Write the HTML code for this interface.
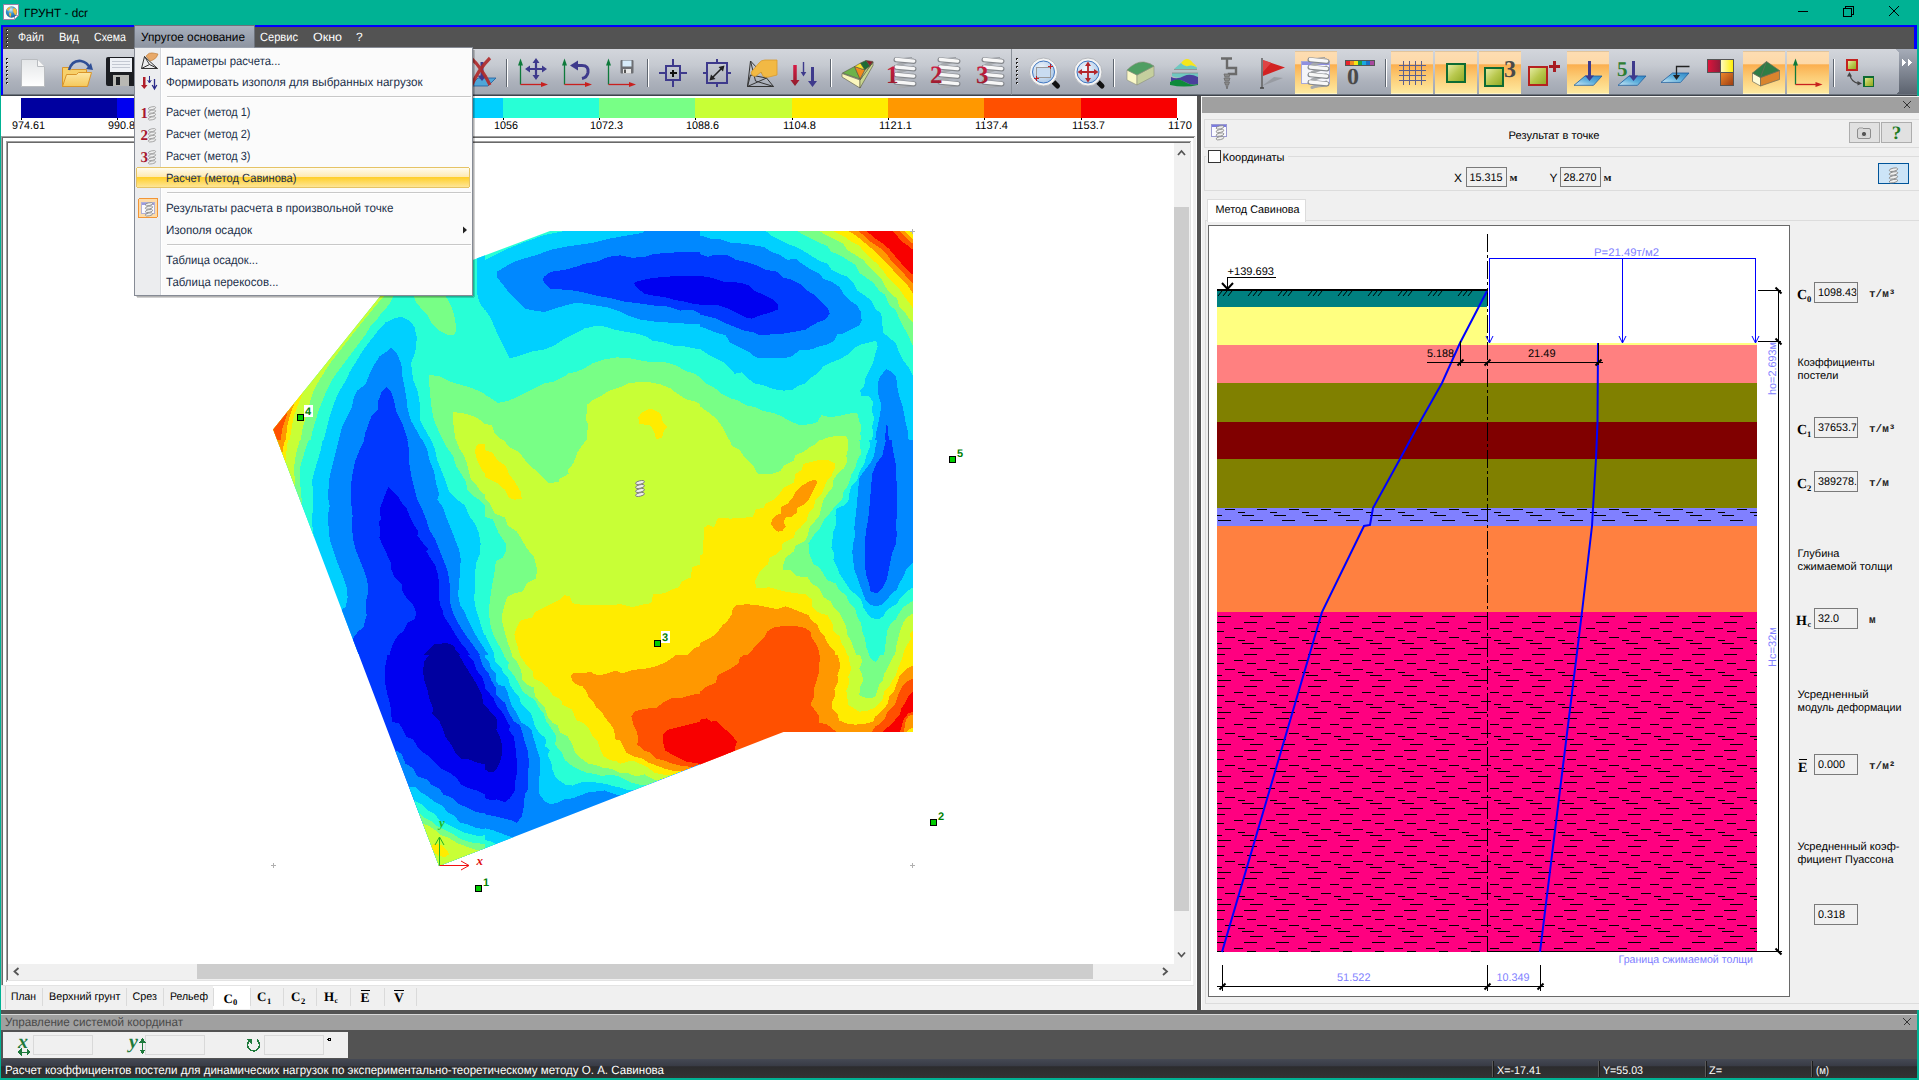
<!DOCTYPE html>
<html><head><meta charset="utf-8"><title>ГРУНТ - dcr</title>
<style>html,body{margin:0;padding:0;background:#00B294;overflow:hidden}svg{display:block;font-family:"Liberation Sans",sans-serif}
.c{shape-rendering:crispEdges}</style></head><body>
<svg width="1919" height="1080" viewBox="0 0 1919 1080" shape-rendering="crispEdges" text-rendering="geometricPrecision">
<!-- frame -->
<rect x="0" y="0" width="1919" height="1080" fill="#00B294" />
<text x="24" y="17" font-size="12" fill="#000" textLength="64" lengthAdjust="spacingAndGlyphs" >ГРУНТ - dcr</text>
<defs><radialGradient id="globe" cx=".45" cy=".3" r=".75"><stop offset="0" stop-color="#D8EEF9"/><stop offset=".45" stop-color="#3C97CF"/><stop offset="1" stop-color="#0F5A98"/></radialGradient></defs><g shape-rendering="auto"><path d="M3.500 4.500h15v11l-4 4h-11z" fill="#fbfbfb" stroke="#9A7FA6" stroke-width="1"/><path d="M14.500 19.500v-4h4z" fill="#fff" stroke="#9A7FA6" stroke-width=".8"/><circle cx="11.500" cy="12" r="5.700" fill="url(#globe)"/><path d="M6.800 9.200q1.200-1.800 3.200-2.200q.8.600.2 1.500q-1 .8-1.600 2.200q-1.200.2-1.800-1.500zM9.200 12.800q1.400-.4 2 .8q.2 1.600-.8 3.400q-.8-.2-1-1.800q-.6-1.200-.2-2.400zM13.200 8.300q2-.6 3.200 1.200q1 2.400 0 4.600q-.8 1.200-1.600.8q-.2-1.600-1.400-2.400q-.8-2.200-.2-4.200zM10.800 7q.8-.5 1.400 0l-.6.600z" fill="#F5B93A"/></g>
<rect x="1798" y="11" width="10" height="1" fill="#000" />
<path d="M1843.5 8.5h8v8h-8z M1845.5 8.5v-2h8v8h-2" fill="none" stroke="#000" stroke-width="1"/>
<path d="M1889 6l10 10M1899 6l-10 10" stroke="#000" stroke-width="1.1" fill="none"/>
<rect x="1" y="25" width="1916" height="2" fill="#0000FF" />
<rect x="1" y="25" width="2" height="70" fill="#0000FF" />
<rect x="1914" y="25" width="3" height="24" fill="#0000FF" />
<rect x="3" y="27" width="1911" height="22" fill="#535353" />
<rect x="6" y="29" width="2" height="2" fill="#2a2a2a" />
<rect x="7" y="30" width="1" height="1" fill="#fff" />
<rect x="6" y="33" width="2" height="2" fill="#2a2a2a" />
<rect x="7" y="34" width="1" height="1" fill="#fff" />
<rect x="6" y="37" width="2" height="2" fill="#2a2a2a" />
<rect x="7" y="38" width="1" height="1" fill="#fff" />
<rect x="6" y="41" width="2" height="2" fill="#2a2a2a" />
<rect x="7" y="42" width="1" height="1" fill="#fff" />
<rect x="6" y="45" width="2" height="2" fill="#2a2a2a" />
<rect x="7" y="46" width="1" height="1" fill="#fff" />
<text x="18" y="41" font-size="12" fill="#fff" textLength="26" lengthAdjust="spacingAndGlyphs" >Файл</text>
<text x="59" y="41" font-size="12" fill="#fff" textLength="20" lengthAdjust="spacingAndGlyphs" >Вид</text>
<text x="94" y="41" font-size="12" fill="#fff" textLength="32" lengthAdjust="spacingAndGlyphs" >Схема</text>
<defs><linearGradient id="mh" x1="0" y1="0" x2="0" y2="1"><stop offset="0" stop-color="#A9B1BF"/><stop offset="1" stop-color="#8B929E"/></linearGradient></defs>
<rect x="134" y="25" width="121" height="24" fill="url(#mh)" />
<rect x="134" y="25" width="121" height="1" fill="#6d737d" />
<rect x="134" y="25" width="1" height="24" fill="#6d737d" />
<rect x="254" y="25" width="1" height="24" fill="#6d737d" />
<text x="141" y="41" font-size="12" fill="#000" textLength="104" lengthAdjust="spacingAndGlyphs" >Упругое основание</text>
<text x="260" y="41" font-size="12" fill="#fff" textLength="38" lengthAdjust="spacingAndGlyphs" >Сервис</text>
<text x="313" y="41" font-size="12" fill="#fff" textLength="29" lengthAdjust="spacingAndGlyphs" >Окно</text>
<text x="356" y="41" font-size="12" fill="#fff" >?</text>
<defs><linearGradient id="tb" x1="0" y1="0" x2="0" y2="1"><stop offset="0" stop-color="#D3D6DC"/><stop offset=".35" stop-color="#C6CAD1"/><stop offset=".7" stop-color="#ADB2BC"/><stop offset="1" stop-color="#A0A6B1"/></linearGradient><linearGradient id="tbc" x1="0" y1="0" x2="0" y2="1"><stop offset="0" stop-color="#A6ACB8"/><stop offset="1" stop-color="#5A616D"/></linearGradient></defs>
<rect x="3" y="49" width="1914" height="46" fill="url(#tbc)" />
<path d="M3 49H1893q6 0 6 6V89q0 6-6 6H3z" fill="url(#tb)"/>
<rect x="3" y="94" width="1914" height="1" fill="#6b727c" />
<rect x="1" y="95" width="1916" height="1" fill="#3e434b" />
<rect x="6" y="58" width="2" height="2" fill="#1f1f1f" />
<rect x="7" y="59" width="1" height="1" fill="#fff" />
<rect x="6" y="62" width="2" height="2" fill="#1f1f1f" />
<rect x="7" y="63" width="1" height="1" fill="#fff" />
<rect x="6" y="66" width="2" height="2" fill="#1f1f1f" />
<rect x="7" y="67" width="1" height="1" fill="#fff" />
<rect x="6" y="70" width="2" height="2" fill="#1f1f1f" />
<rect x="7" y="71" width="1" height="1" fill="#fff" />
<rect x="6" y="74" width="2" height="2" fill="#1f1f1f" />
<rect x="7" y="75" width="1" height="1" fill="#fff" />
<rect x="6" y="78" width="2" height="2" fill="#1f1f1f" />
<rect x="7" y="79" width="1" height="1" fill="#fff" />
<rect x="6" y="82" width="2" height="2" fill="#1f1f1f" />
<rect x="7" y="83" width="1" height="1" fill="#fff" />
<path d="M1902 59l4 3.5-4 3.5z M1908 59l4 3.5-4 3.5z" fill="#fff"/>
<rect x="1" y="96" width="1196" height="914" fill="#fff" />
<rect x="1197" y="96" width="4" height="914" fill="#535353" />
<rect x="1201" y="96" width="1716" height="914" fill="#F0F0F0" />
<rect x="1201" y="96" width="1" height="914" fill="#fff" />
<rect x="1202" y="97" width="1714" height="16" fill="#A0A0A0" />
<path d="M1903.5 101.5l7 7M1910.5 101.5l-7 7" stroke="#333" stroke-width="1.1" fill="none"/>
<rect x="1" y="1010" width="1916" height="49" fill="#535353" />
<rect x="1" y="1014" width="1916" height="16" fill="#A0A0A0" />
<rect x="1" y="1014" width="1916" height="1" fill="#d8d8d8" />
<text x="5" y="1026" font-size="12" fill="#4a4a4a" textLength="178" lengthAdjust="spacingAndGlyphs" >Управление системой координат</text>
<path d="M1903.5 1018.5l7 7M1910.5 1018.5l-7 7" stroke="#333" stroke-width="1.1" fill="none"/>
<rect x="3" y="1032" width="345" height="26" fill="#F0F0F0" />
<rect x="33.5" y="1035.5" width="59" height="19" fill="#F0F0F0" stroke="#d9d9d9"/>
<rect x="145.5" y="1035.5" width="59" height="19" fill="#F0F0F0" stroke="#d9d9d9"/>
<rect x="264.5" y="1035.5" width="59" height="19" fill="#F0F0F0" stroke="#d9d9d9"/>
<text x="18" y="1047.5" font-size="20" fill="#1e7a3c" font-family="Liberation Serif" font-weight="bold" font-style="italic" >x</text>
<path d="M18 1052h12M18 1052l3-2.5v5z M30 1052l-3-2.5v5z" stroke="#1e7a3c" stroke-width="1" fill="#1e7a3c"/>
<text x="129" y="1047.5" font-size="20" fill="#1e7a3c" font-family="Liberation Serif" font-weight="bold" font-style="italic" >y</text>
<path d="M142.5 1040v12M142.5 1039l-2.5 3h5z M142.5 1053l-2.5-3h5z" stroke="#1e7a3c" stroke-width="1" fill="#1e7a3c"/>
<path d="M250 1040a6 6 0 1 0 7 0" stroke="#1e7a3c" stroke-width="1.6" fill="none"/><path d="M246 1038.5h5.5v5z" fill="#1e7a3c"/>
<circle cx="329.5" cy="1039.5" r="1.5" fill="none" stroke="#000" stroke-width="1"/>
<defs><linearGradient id="sb" x1="0" y1="0" x2="0" y2="1"><stop offset="0" stop-color="#454954"/><stop offset=".38" stop-color="#383b45"/><stop offset=".4" stop-color="#2c2c2e"/><stop offset="1" stop-color="#333"/></linearGradient></defs>
<rect x="1" y="1059" width="1916" height="19" fill="url(#sb)" />
<text x="5" y="1074" font-size="12" fill="#fff" textLength="659" lengthAdjust="spacingAndGlyphs" >Расчет коэффициентов постели для динамических нагрузок по экспериментально-теоретическому методу О. А. Савинова</text>
<rect x="1492" y="1061" width="1" height="16" fill="#5a5a5a" />
<rect x="1493" y="1061" width="1" height="16" fill="#1c1c1c" />
<rect x="1598" y="1061" width="1" height="16" fill="#5a5a5a" />
<rect x="1599" y="1061" width="1" height="16" fill="#1c1c1c" />
<rect x="1705" y="1061" width="1" height="16" fill="#5a5a5a" />
<rect x="1706" y="1061" width="1" height="16" fill="#1c1c1c" />
<rect x="1811" y="1061" width="1" height="16" fill="#5a5a5a" />
<rect x="1812" y="1061" width="1" height="16" fill="#1c1c1c" />
<text x="1497" y="1074" font-size="11" fill="#fff" textLength="44" lengthAdjust="spacingAndGlyphs" >X=-17.41</text>
<text x="1603" y="1074" font-size="11" fill="#fff" textLength="40" lengthAdjust="spacingAndGlyphs" >Y=55.03</text>
<text x="1709" y="1074" font-size="11" fill="#fff" textLength="13" lengthAdjust="spacingAndGlyphs" >Z=</text>
<text x="1816" y="1074" font-size="11" fill="#fff" textLength="13" lengthAdjust="spacingAndGlyphs" >(м)</text>
<!-- left -->
<rect x="21" y="98" width="96" height="20" fill="#0000A0" />
<rect x="117" y="98" width="97" height="20" fill="#0000F0" />
<rect x="214" y="98" width="96" height="20" fill="#0038FF" />
<rect x="310" y="98" width="96" height="20" fill="#0088FF" />
<rect x="406" y="98" width="97" height="20" fill="#00D0FF" />
<rect x="503" y="98" width="96" height="20" fill="#28FFD6" />
<rect x="599" y="98" width="96" height="20" fill="#78FF86" />
<rect x="695" y="98" width="97" height="20" fill="#C8FF36" />
<rect x="792" y="98" width="96" height="20" fill="#FFEC00" />
<rect x="888" y="98" width="96" height="20" fill="#FF9800" />
<rect x="984" y="98" width="97" height="20" fill="#FF5000" />
<rect x="1081" y="98" width="96" height="20" fill="#F80000" />
<rect x="21" y="118" width="1" height="2" fill="#000" />
<text x="12" y="129" font-size="11" fill="#000" textLength="33" lengthAdjust="spacingAndGlyphs" >974.61</text>
<rect x="117" y="118" width="1" height="2" fill="#000" />
<text x="108" y="129" font-size="11" fill="#000" textLength="27" lengthAdjust="spacingAndGlyphs" >990.8</text>
<rect x="214" y="118" width="1" height="2" fill="#000" />
<text x="205" y="129" font-size="11" fill="#000" textLength="33" lengthAdjust="spacingAndGlyphs" >1007.1</text>
<rect x="310" y="118" width="1" height="2" fill="#000" />
<text x="301" y="129" font-size="11" fill="#000" textLength="33" lengthAdjust="spacingAndGlyphs" >1023.4</text>
<rect x="406" y="118" width="1" height="2" fill="#000" />
<text x="397" y="129" font-size="11" fill="#000" textLength="33" lengthAdjust="spacingAndGlyphs" >1039.7</text>
<rect x="503" y="118" width="1" height="2" fill="#000" />
<text x="494" y="129" font-size="11" fill="#000" textLength="24" lengthAdjust="spacingAndGlyphs" >1056</text>
<rect x="599" y="118" width="1" height="2" fill="#000" />
<text x="590" y="129" font-size="11" fill="#000" textLength="33" lengthAdjust="spacingAndGlyphs" >1072.3</text>
<rect x="695" y="118" width="1" height="2" fill="#000" />
<text x="686" y="129" font-size="11" fill="#000" textLength="33" lengthAdjust="spacingAndGlyphs" >1088.6</text>
<rect x="792" y="118" width="1" height="2" fill="#000" />
<text x="783" y="129" font-size="11" fill="#000" textLength="33" lengthAdjust="spacingAndGlyphs" >1104.8</text>
<rect x="888" y="118" width="1" height="2" fill="#000" />
<text x="879" y="129" font-size="11" fill="#000" textLength="33" lengthAdjust="spacingAndGlyphs" >1121.1</text>
<rect x="984" y="118" width="1" height="2" fill="#000" />
<text x="975" y="129" font-size="11" fill="#000" textLength="33" lengthAdjust="spacingAndGlyphs" >1137.4</text>
<rect x="1081" y="118" width="1" height="2" fill="#000" />
<text x="1072" y="129" font-size="11" fill="#000" textLength="33" lengthAdjust="spacingAndGlyphs" >1153.7</text>
<rect x="1177" y="118" width="1" height="2" fill="#000" />
<text x="1168" y="129" font-size="11" fill="#000" textLength="24" lengthAdjust="spacingAndGlyphs" >1170</text>
<rect x="1" y="986" width="1196" height="24" fill="#F0F0F0" />
<rect x="1193" y="136" width="4" height="874" fill="#F0F0F0" />
<rect x="1196" y="96" width="1" height="914" fill="#fff" />
<rect x="1" y="136" width="1194" height="1" fill="#A0A0A0" />
<rect x="1" y="136" width="1" height="850" fill="#A0A0A0" />
<rect x="2" y="137" width="1192" height="1" fill="#696969" />
<rect x="2" y="137" width="1" height="848" fill="#696969" />
<rect x="1" y="985" width="1193" height="1" fill="#E3E3E3" />
<rect x="6" y="141" width="1185" height="1" fill="#A0A0A0" />
<rect x="6" y="141" width="1" height="841" fill="#A0A0A0" />
<rect x="7" y="142" width="1183" height="1" fill="#696969" />
<rect x="7" y="142" width="1" height="839" fill="#696969" />
<rect x="7" y="980" width="1184" height="1" fill="#E3E3E3" />
<rect x="1190" y="142" width="1" height="839" fill="#E3E3E3" />
<defs><clipPath id="mapclip"><polygon points="273.2,429.4 382,294 550,231 913,231 913,732 783.5,732 439,866"/></clipPath><clipPath id="tc_t00"><rect x="270" y="225" width="215" height="215"/></clipPath><clipPath id="tc_t01"><rect x="485" y="225" width="215" height="215"/></clipPath><clipPath id="tc_t02"><rect x="700" y="225" width="215" height="215"/></clipPath><clipPath id="tc_t10"><rect x="270" y="440" width="215" height="215"/></clipPath><clipPath id="tc_t11"><rect x="485" y="440" width="215" height="215"/></clipPath><clipPath id="tc_t12"><rect x="700" y="440" width="215" height="215"/></clipPath><clipPath id="tc_t20"><rect x="270" y="655" width="215" height="215"/></clipPath><clipPath id="tc_t21"><rect x="485" y="655" width="215" height="215"/></clipPath><clipPath id="tc_t22"><rect x="700" y="655" width="215" height="215"/></clipPath></defs><g clip-path="url(#mapclip)"><g clip-path="url(#tc_t00)"><rect x="270" y="225" width="215" height="215" fill="#28FFD6"/><polygon points="393.4,295.7 389.4,304.6 381.5,312.6 377.5,318.6 370.5,326.5 365.6,334.5 359.6,342.5 353.6,350.4 347.6,358.4 341.7,366.3 335.7,374.3 330.7,382.3 326.7,390.2 322.8,400.2 318.8,410.1 315.8,420.1 312.8,430.0 310.8,440.0 260.0,440.0 260.0,284.7 393.4,284.7" fill="#78FF86"/><polygon points="383.9,296.7 377.5,303.6 370.1,312.6 362.0,322.5 354.0,332.5 347.0,341.5 339.3,351.4 332.3,360.4 327.3,367.3 321.8,376.3 317.0,384.3 312.2,394.2 309.4,404.2 306.8,414.1 303.8,424.1 301.9,432.0 300.9,440.0 260.0,440.0 260.0,284.7 383.9,284.7" fill="#C8FF36"/><polygon points="303.8,391.2 299.9,400.2 296.9,408.1 293.9,416.1 292.3,424.1 290.9,432.0 289.9,440.0 260.0,440.0 260.0,384.3" fill="#FFEC00"/><polygon points="294.9,402.2 291.9,410.1 288.9,419.1 286.9,428.1 285.9,440.0 260.0,440.0 260.0,394.2" fill="#FF9800"/><polygon points="287.9,411.1 284.9,421.1 281.9,430.0 280.9,440.0 260.0,440.0 260.0,404.2" fill="#FF5000"/><polygon points="413.3,295.7 416.3,302.6 421.3,308.6 427.3,314.6 431.2,322.5 439.2,330.5 447.2,334.5 454.1,335.5 456.1,330.5 455.5,322.5 454.1,314.6 451.2,306.6 448.2,300.6 445.2,295.7 445.2,284.7 413.3,284.7" fill="#78FF86"/><polygon points="323.8,440.0 326.7,428.1 329.7,416.1 333.7,404.2 338.7,392.2 344.7,382.3 349.6,372.3 355.6,362.4 361.6,352.4 367.5,344.4 373.5,336.5 379.5,328.5 385.5,322.5 393.4,318.6 401.4,316.6 409.4,320.6 414.3,326.5 416.7,336.5 416.3,346.4 414.3,354.4 411.3,362.4 411.7,370.3 413.3,380.3 417.3,390.2 419.3,400.2 420.3,410.1 419.9,420.1 425.3,430.0 431.1,440.0" fill="#00D0FF"/><polygon points="477.0,292.7 479.0,300.6 482.0,306.6 486.0,311.6 489.0,311.6 489.0,244.9 477.0,244.9" fill="#00D0FF"/><polygon points="338.7,440.0 341.7,428.1 346.6,418.1 351.6,408.1 353.6,398.2 357.6,390.2 365.6,384.3 369.5,374.3 374.5,364.4 379.5,356.4 385.5,352.4 391.4,347.4 397.4,354.4 401.4,364.4 402.4,376.3 404.4,386.2 406.4,398.2 407.4,408.1 410.7,420.1 416.3,430.0 421.9,440.0" fill="#0088FF"/><polygon points="364.0,440.0 365.6,432.0 368.5,424.1 371.5,416.1 377.5,410.1 378.5,400.2 381.5,392.2 386.5,387.2 391.4,392.2 394.4,402.2 396.4,412.1 401.8,422.1 404.4,430.0 407.8,440.0" fill="#0038FF"/><polygon points="429.3,374.7 439.2,376.3 449.2,381.3 459.1,384.3 469.1,387.2 477.0,390.2 485.0,394.2 489.0,396.2 489.0,444.0 443.0,444.0 443.0,440.0 438.2,430.0 434.0,420.1 431.6,408.1 430.3,396.2 429.3,384.3" fill="#78FF86"/><polygon points="453.1,412.1 463.1,413.1 473.1,416.1 479.0,419.1 485.0,424.1 489.0,426.1 489.0,444.0 455.7,444.0 455.7,440.0 454.1,430.0 452.9,420.1" fill="#C8FF36"/></g><g clip-path="url(#tc_t01)"><rect x="485" y="225" width="215" height="215" fill="#28FFD6"/><polygon points="481.0,261.8 485.0,259.8 504.9,249.9 524.8,241.9 544.7,235.0 564.6,231.0 704.0,225.0 704.0,350.4 700.0,349.4 684.1,346.4 672.1,345.4 664.2,342.5 652.2,340.5 646.2,336.5 636.3,333.5 624.4,331.5 614.4,329.5 604.4,326.5 594.5,326.1 584.5,328.5 574.6,333.5 564.6,338.5 554.7,345.4 544.7,349.4 532.8,351.4 520.8,355.4 509.9,358.4 502.9,344.4 496.9,332.5 491.0,318.6 485.0,309.6 481.0,304.6" fill="#00D0FF"/><polygon points="496.9,271.8 506.9,265.8 516.9,260.8 526.8,257.8 536.8,254.9 550.7,249.9 564.6,246.9 578.6,244.9 592.5,242.9 608.4,238.9 624.4,235.9 642.3,233.0 644.3,231.0 704.0,225.0 704.0,325.5 700.0,324.5 684.1,323.5 668.1,322.5 654.2,321.6 640.3,319.6 628.3,315.6 620.4,311.6 608.4,307.6 596.5,305.6 584.5,303.6 574.6,303.0 564.6,305.6 554.7,308.6 544.7,312.0 534.8,310.6 524.8,308.6 517.8,301.6 508.9,292.7 502.9,284.7 496.9,276.8" fill="#0088FF"/><polygon points="543.7,276.8 550.7,271.8 564.6,269.8 574.6,267.2 584.5,263.8 596.5,261.8 608.4,256.9 620.4,255.3 632.3,257.8 644.3,256.9 654.2,253.9 668.1,252.9 684.1,251.9 700.0,252.5 704.0,252.5 704.0,313.6 700.0,313.6 692.0,309.6 680.1,310.6 668.1,306.6 654.2,305.6 640.3,303.6 624.4,301.6 608.4,297.7 596.5,295.7 584.5,292.7 574.6,290.7 564.6,289.7 550.7,288.7 544.7,283.7 543.1,280.3" fill="#0038FF"/><polygon points="633.3,283.1 636.3,281.7 648.2,278.8 660.2,277.2 674.1,276.2 688.1,276.4 700.0,275.8 704.0,275.8 704.0,304.6 700.0,304.6 692.0,303.6 684.1,301.6 674.1,299.7 664.2,297.1 654.2,295.7 644.3,293.7 638.3,288.7" fill="#0000F0"/><polygon points="481.0,394.2 485.0,395.2 491.0,398.2 497.9,402.8 506.9,401.2 514.9,398.2 524.8,393.2 534.8,388.2 544.7,383.3 554.7,381.3 564.6,376.3 568.6,373.3 574.6,372.3 584.5,368.3 592.5,363.4 604.4,359.4 616.4,357.4 628.3,358.0 640.3,360.4 652.2,362.4 664.2,362.0 676.1,365.3 686.1,371.3 694.0,373.3 700.0,377.3 704.0,378.3 704.0,444.0 481.0,444.0" fill="#78FF86"/><polygon points="586.5,405.2 592.5,400.2 600.5,396.2 608.4,391.2 620.4,387.2 628.3,383.3 640.3,381.9 650.2,382.3 660.2,384.3 670.1,388.2 678.1,394.2 686.1,399.2 694.0,401.2 700.0,404.2 704.0,405.2 704.0,444.0 587.5,444.0 587.5,440.0 586.5,434.0 588.5,426.1 585.5,418.1 587.5,410.1" fill="#C8FF36"/><polygon points="481.0,424.1 485.0,424.1 492.0,425.1 494.0,432.0 496.9,436.0 503.9,441.0 503.9,444.0 481.0,444.0" fill="#C8FF36"/><polygon points="638.3,417.1 642.3,412.1 650.2,408.5 656.2,411.1 661.2,414.1 662.2,421.1 667.2,427.1 663.2,432.0 662.2,438.0 656.2,439.0 654.2,432.0 650.2,425.1 639.3,424.1" fill="#FFEC00"/></g><g clip-path="url(#tc_t02)"><rect x="700" y="225" width="215" height="215" fill="#00D0FF"/><polygon points="765.7,231.0 771.7,235.9 779.6,239.9 787.6,243.9 795.6,246.9 803.5,250.9 811.5,255.9 819.4,260.8 827.4,263.8 831.4,269.8 839.4,273.8 847.3,276.8 853.3,282.7 857.3,290.7 865.2,295.7 871.2,300.6 875.2,308.6 881.2,313.6 882.2,322.5 883.1,332.5 889.1,337.5 896.1,343.4 899.1,352.4 903.1,360.4 908.0,366.3 911.0,372.3 913.0,376.3 919.0,376.3 919.0,225.0 765.7,225.0" fill="#28FFD6"/><polygon points="700.0,348.8 708.0,354.4 715.9,358.4 723.9,362.4 729.9,368.3 734.8,373.9 741.8,372.3 746.8,377.3 753.8,383.3 763.7,385.3 773.7,389.2 783.6,390.6 791.6,390.2 797.5,386.2 805.5,383.3 811.5,377.3 817.5,373.3 823.4,366.3 831.4,362.4 841.3,358.4 849.3,353.4 855.3,347.4 861.2,344.4 869.2,342.5 876.2,340.5 877.6,346.4 875.2,354.4 873.2,362.4 869.2,370.3 865.2,378.3 864.2,386.2 860.3,390.2 860.9,395.8 869.2,396.2 873.2,402.2 871.6,410.1 874.2,418.1 872.2,426.1 873.2,434.0 871.6,440.0 871.6,444.0 696.0,444.0 696.0,348.4" fill="#28FFD6"/><polygon points="797.5,231.0 803.5,235.0 811.5,238.9 819.4,242.9 827.4,245.9 831.4,251.9 839.4,254.9 847.3,259.8 855.3,264.8 859.3,272.8 865.2,276.8 873.2,282.7 879.2,290.7 885.1,294.7 889.1,304.6 896.1,310.6 899.1,318.6 903.1,326.5 908.0,334.5 911.0,342.5 913.0,345.4 919.0,345.4 919.0,225.0 797.5,225.0" fill="#78FF86"/><polygon points="819.4,231.0 827.4,235.9 835.4,239.9 843.3,243.9 847.3,249.9 855.3,254.9 863.2,259.8 869.2,266.8 875.2,272.8 881.2,278.8 885.1,286.7 891.1,293.7 897.1,298.7 899.1,306.6 905.0,312.6 909.0,318.6 913.0,322.5 919.0,322.5 919.0,225.0 819.4,225.0" fill="#C8FF36"/><polygon points="833.4,231.0 839.4,234.0 845.3,236.9 851.3,241.9 859.3,245.9 865.2,252.9 871.2,258.8 877.2,263.8 883.1,270.8 888.1,277.8 893.1,282.7 899.1,288.7 903.1,294.7 909.0,302.6 913.0,308.6 919.0,308.6 919.0,225.0 833.4,225.0" fill="#FFEC00"/><polygon points="848.3,231.0 855.3,235.0 861.2,239.9 867.2,244.9 873.2,249.9 879.2,255.9 885.1,261.8 891.1,267.8 896.1,273.8 901.1,278.8 907.0,284.7 913.0,293.7 919.0,293.7 919.0,225.0 848.3,225.0" fill="#FF9800"/><polygon points="858.3,231.0 863.2,235.0 869.2,240.9 875.2,244.9 881.2,248.9 887.1,254.9 891.1,260.8 897.1,266.8 903.1,272.8 909.0,279.7 913.0,283.7 919.0,283.7 919.0,225.0 858.3,225.0" fill="#FF5000"/><polygon points="866.2,231.0 871.2,235.0 877.2,239.9 883.1,243.9 889.1,248.9 894.1,254.9 899.1,260.8 905.0,267.8 910.0,272.8 913.0,274.8 919.0,274.8 919.0,225.0 866.2,225.0" fill="#F80000"/><polygon points="892.1,231.0 897.1,235.9 901.1,240.9 907.0,244.9 913.0,249.9 919.0,249.9 919.0,225.0 892.1,225.0" fill="#FF5000"/><polygon points="899.1,231.0 903.1,235.0 908.0,239.9 913.0,243.9 919.0,243.9 919.0,225.0 899.1,225.0" fill="#FF9800"/><polygon points="904.1,231.0 908.0,235.0 913.0,238.9 919.0,238.9 919.0,225.0 904.1,225.0" fill="#FFEC00"/><polygon points="696.0,235.0 700.0,235.4 710.0,238.5 719.9,239.3 729.9,242.5 739.8,243.3 751.8,244.9 763.7,246.9 771.7,251.9 779.6,254.9 787.6,259.8 795.6,258.8 803.5,264.8 811.5,269.8 819.4,273.8 823.4,278.8 831.4,281.7 839.4,286.7 843.3,293.7 851.3,301.6 857.3,305.6 861.2,312.6 861.6,320.6 859.3,325.5 853.3,328.5 843.3,333.5 837.4,334.5 833.4,341.5 827.4,344.4 819.4,346.4 811.5,349.4 799.5,350.4 791.6,356.4 783.6,358.4 769.7,358.4 755.7,357.4 749.8,352.4 739.8,347.4 729.9,342.5 725.9,335.5 715.9,332.5 706.0,328.5 700.0,326.5 696.0,326.5" fill="#0088FF"/><polygon points="696.0,254.3 700.0,254.3 708.0,256.9 713.9,254.9 727.9,255.3 735.8,259.8 745.8,261.8 757.7,265.8 765.7,269.8 777.6,271.8 783.6,277.8 791.6,279.7 801.5,284.7 807.5,290.7 815.5,295.7 821.4,301.6 827.4,307.6 829.8,313.6 825.4,319.6 817.5,322.5 811.5,325.5 805.5,329.5 795.6,331.5 783.6,333.5 769.7,334.5 759.7,335.5 753.8,332.5 743.8,330.5 733.8,326.5 723.9,322.5 715.9,318.6 708.0,316.6 700.0,314.6 696.0,314.6" fill="#0038FF"/><polygon points="696.0,275.8 700.0,275.8 711.9,277.8 723.9,281.7 739.8,282.7 749.8,285.7 753.8,290.7 763.7,294.7 773.7,299.7 777.6,304.6 778.0,309.6 769.7,312.6 759.7,315.6 751.8,318.6 745.8,317.6 735.8,312.6 727.9,308.6 719.9,305.6 710.0,304.6 700.0,304.6 696.0,304.6" fill="#0000F0"/><polygon points="886.1,369.3 880.2,376.3 877.6,384.3 878.2,394.2 881.2,404.2 880.2,414.1 878.2,424.1 876.2,432.0 875.2,440.0 875.2,444.0 908.6,444.0 908.6,440.0 908.0,432.0 906.0,424.1 904.1,414.1 902.1,404.2 899.1,396.2 897.1,386.2 896.1,376.3 891.1,371.3" fill="#0088FF"/><polygon points="886.1,424.1 888.1,427.1 888.7,440.0 888.7,444.0 885.1,444.0 885.1,440.0" fill="#0038FF"/><polygon points="696.0,377.3 700.0,377.3 706.0,383.3 713.9,387.2 721.9,394.2 729.9,398.2 737.8,400.2 745.8,405.2 755.7,407.2 763.7,411.1 773.7,413.1 781.6,416.1 789.6,421.1 799.5,425.1 811.5,424.1 817.5,422.1 821.4,415.1 829.4,417.1 839.4,416.1 847.3,413.7 857.3,413.1 859.3,421.1 861.2,426.1 860.3,434.0 861.6,440.0 861.6,444.0 696.0,444.0" fill="#78FF86"/><polygon points="696.0,406.2 700.0,406.2 708.0,412.1 715.9,418.1 721.9,426.1 725.9,434.0 728.9,440.0 728.9,444.0 696.0,444.0" fill="#C8FF36"/><polygon points="821.4,440.0 829.4,437.0 839.4,435.6 846.3,436.4 848.3,440.0 848.3,444.0 821.4,444.0" fill="#C8FF36"/></g><g clip-path="url(#tc_t10)"><rect x="270" y="440" width="215" height="215" fill="#00D0FF"/><polygon points="322.8,440.0 320.8,450.0 317.8,459.9 314.8,469.9 312.2,479.8 312.8,491.8 313.4,505.7 311.8,519.6 312.8,529.6 314.2,537.5 266.0,537.5 266.0,436.0 322.8,436.0" fill="#28FFD6"/><polygon points="308.8,440.0 305.8,448.0 302.8,457.9 299.9,467.9 299.9,479.8 300.9,491.8 302.2,504.7 266.0,504.7 266.0,436.0 308.8,436.0" fill="#78FF86"/><polygon points="299.9,440.0 296.9,450.0 294.9,459.9 293.9,469.9 294.9,479.8 295.5,488.8 266.0,488.8 266.0,436.0 299.9,436.0" fill="#C8FF36"/><polygon points="287.9,440.0 286.9,448.0 285.9,455.9 285.9,462.9 266.0,462.9 266.0,436.0 287.9,436.0" fill="#FFEC00"/><polygon points="284.9,440.0 283.5,446.0 282.3,452.9 266.0,452.9 266.0,436.0 284.9,436.0" fill="#FF9800"/><polygon points="338.7,436.0 338.7,440.0 335.7,451.9 332.7,463.9 329.7,475.8 328.7,487.8 327.7,495.7 329.7,505.7 327.7,515.6 328.7,527.6 329.7,539.5 333.7,551.5 337.7,563.4 342.7,575.4 346.6,587.3 347.6,597.3 345.6,607.2 340.7,610.2 335.7,613.2 361.6,659.0 490.6,659.0 488.6,655.0 482.0,645.0 475.0,634.1 471.1,626.1 467.1,618.2 464.1,611.2 460.1,605.2 458.1,595.3 459.1,583.3 460.1,571.4 460.7,559.4 459.1,549.5 455.1,539.5 451.2,529.6 447.2,519.6 443.2,507.7 437.2,499.7 439.2,493.8 436.2,483.8 434.2,471.9 429.3,459.9 427.3,450.0 422.3,440.0 422.3,436.0" fill="#0088FF"/><polygon points="364.6,436.0 364.6,440.0 359.6,450.0 355.6,459.9 353.2,469.9 351.6,479.8 350.6,491.8 351.2,503.7 352.6,515.6 352.0,527.6 353.2,539.5 355.6,549.5 359.6,559.4 363.6,569.4 367.1,579.4 368.5,591.3 365.6,603.2 366.6,615.2 363.6,627.1 357.6,632.1 352.6,639.1 349.6,641.1 361.6,659.0 482.2,659.0 480.2,655.0 475.0,648.0 470.1,641.1 463.5,632.1 458.1,623.1 453.1,613.2 450.2,603.2 450.2,591.3 449.2,579.4 447.2,569.4 443.2,559.4 439.2,549.5 435.2,539.5 429.3,529.6 426.3,519.6 422.3,509.7 417.3,499.7 414.3,487.8 411.3,475.8 409.4,463.9 409.4,451.9 407.4,440.0 407.4,436.0" fill="#0038FF"/><polygon points="388.4,486.8 385.5,493.8 382.5,501.7 379.5,509.7 381.1,519.6 378.5,522.6 380.5,529.6 379.5,537.5 382.5,545.5 386.5,553.5 390.4,561.4 391.4,569.4 394.4,577.4 401.4,583.3 402.4,591.3 407.4,599.3 413.3,605.2 416.3,613.2 414.3,619.2 407.4,623.1 403.4,631.1 397.4,636.1 393.4,643.1 390.4,651.0 389.4,655.0 389.4,659.0 471.5,659.0 469.9,655.0 466.1,649.0 461.1,643.1 455.1,634.1 449.2,624.1 443.6,616.2 443.2,611.2 440.2,605.2 438.8,597.3 439.2,587.3 438.2,575.4 435.2,565.4 431.2,559.4 426.3,551.5 428.3,548.5 423.3,543.5 417.3,535.6 418.3,531.6 413.3,523.6 409.4,515.6 406.4,507.7 402.4,503.7 397.4,495.7 391.4,489.8" fill="#0000F0"/><polygon points="422.3,659.0 424.3,654.0 431.2,647.0 434.2,644.2 447.2,643.1 454.1,646.0 455.9,651.0 460.9,655.0 462.1,659.0" fill="#0000A0"/><polygon points="431.2,436.0 431.2,440.0 435.2,450.0 437.2,459.9 441.2,469.9 445.2,479.8 449.2,491.8 457.1,499.7 465.1,505.7 469.1,515.6 475.0,523.6 479.0,533.6 480.6,543.5 480.0,553.5 476.0,563.4 475.0,575.4 475.0,587.3 474.1,599.3 476.0,609.2 478.0,615.6 481.0,625.1 484.0,634.1 489.0,639.1 491.0,639.1 491.0,436.0" fill="#28FFD6"/><polygon points="443.2,436.0 443.2,440.0 447.2,448.0 453.1,455.9 456.1,465.9 461.1,473.8 466.1,481.8 467.1,489.8 473.1,495.7 479.0,499.7 485.0,505.7 489.0,505.7 489.0,436.0" fill="#78FF86"/><polygon points="456.1,436.0 456.1,440.0 459.1,448.0 464.1,455.9 467.1,463.9 469.1,471.9 471.1,479.8 477.0,485.8 481.0,491.8 485.0,494.7 489.0,494.7 489.0,436.0" fill="#C8FF36"/><polygon points="476.0,446.0 475.0,451.9 477.0,459.9 480.0,465.9 483.0,471.9 485.0,473.8 489.0,473.8 489.0,444.0 479.0,444.0" fill="#FFEC00"/></g><g clip-path="url(#tc_t11)"><rect x="485" y="440" width="215" height="215" fill="#C8FF36"/><polygon points="503.9,440.0 508.9,447.0 518.8,451.9 524.8,459.9 532.8,467.9 540.7,474.8 548.7,482.8 558.7,482.2 559.7,478.8 568.6,473.8 568.2,469.9 573.6,462.9 577.6,451.9 582.5,445.0 586.5,440.0 586.5,436.0 503.9,436.0" fill="#78FF86"/><polygon points="485.0,450.0 493.0,452.9 496.9,459.9 505.9,465.9 508.9,473.8 514.9,481.8 520.8,491.8 521.8,498.7 514.9,499.7 508.9,497.7 504.9,489.8 496.9,482.8 491.0,479.8 485.0,476.8 481.0,476.8 481.0,450.0" fill="#FFEC00"/><polygon points="485.0,498.7 490.0,503.7 495.0,513.7 504.9,517.6 507.9,525.6 516.9,531.6 521.8,539.5 526.8,548.5 533.8,556.5 537.2,569.4 535.8,578.4 526.8,583.3 522.8,591.3 514.9,593.3 506.9,597.3 503.9,607.2 501.9,615.6 502.5,623.1 503.9,629.1 505.3,634.1 507.3,641.1 509.7,648.0 512.1,655.0 512.9,659.0 481.0,659.0 481.0,498.7" fill="#78FF86"/><polygon points="485.0,516.6 493.0,519.6 498.9,533.6 505.9,543.5 506.5,549.5 502.9,557.5 495.9,561.4 494.0,575.4 491.0,591.3 489.4,605.2 489.2,615.6 490.6,625.1 493.0,634.1 496.5,641.1 500.5,648.0 504.1,655.0 505.3,659.0 481.0,659.0 481.0,516.6" fill="#28FFD6"/><polygon points="481.0,629.1 485.0,634.1 487.0,639.1 490.0,645.0 492.6,650.0 494.6,655.0 495.4,659.0 481.0,659.0" fill="#00D0FF"/><polygon points="481.0,647.0 485.0,650.0 487.0,652.6 488.6,655.0 489.4,659.0 481.0,659.0" fill="#0088FF"/><polygon points="521.8,659.0 520.0,655.0 517.8,647.0 515.3,639.1 514.3,634.1 516.9,627.1 520.8,620.2 532.8,617.2 534.8,612.2 542.7,608.2 552.7,603.2 560.6,599.3 564.6,595.3 569.6,596.3 572.6,603.2 584.5,605.2 596.5,604.8 608.4,605.2 620.4,604.2 632.3,607.2 644.3,604.2 651.2,603.2 653.2,594.3 664.2,593.3 672.1,589.3 679.1,587.3 682.1,581.3 691.0,577.4 692.0,567.4 700.0,564.4 704.0,563.4 704.0,659.0" fill="#FFEC00"/><polygon points="688.1,655.0 693.0,649.0 700.0,646.0 704.0,645.0 704.0,659.0 688.1,659.0" fill="#FF9800"/></g><g clip-path="url(#tc_t12)"><rect x="700" y="440" width="215" height="215" fill="#C8FF36"/><polygon points="729.9,440.0 731.9,446.0 739.8,450.0 745.8,458.9 752.8,464.9 757.7,473.8 765.7,474.2 773.7,473.4 780.6,470.9 783.6,465.9 793.6,460.9 795.6,454.9 803.5,451.9 808.5,448.0 815.5,444.0 819.4,440.0 819.4,436.0 729.9,436.0" fill="#78FF86"/><polygon points="700.0,555.5 703.0,553.5 704.0,527.6 709.0,524.6 713.9,527.6 717.9,517.6 729.9,518.6 741.8,518.0 752.8,516.6 755.7,509.7 763.7,507.7 765.7,503.7 773.7,499.7 779.6,493.8 783.6,487.8 793.6,482.8 795.6,473.8 801.5,469.9 803.5,463.9 811.5,461.9 819.4,459.9 827.4,459.9 834.4,462.9 835.4,466.9 831.4,475.8 827.4,479.8 824.4,486.8 821.8,493.8 815.5,499.7 813.5,507.7 808.5,513.7 806.5,520.6 800.5,527.6 795.6,531.6 793.6,537.5 782.6,543.5 781.6,549.5 775.6,554.5 769.7,557.5 767.7,564.4 759.7,571.4 754.7,581.3 756.7,588.3 769.7,587.3 783.6,591.3 795.6,593.3 805.5,594.3 811.5,599.3 812.5,607.2 819.4,613.2 827.4,615.2 832.4,623.1 833.4,631.1 839.4,636.1 841.3,643.1 845.3,649.0 847.3,655.0 847.3,659.0 696.0,659.0 696.0,555.5" fill="#FFEC00"/><polygon points="770.7,523.6 772.7,518.6 775.6,515.6 780.6,513.7 781.6,506.7 787.6,503.7 792.6,497.7 795.6,491.8 801.5,485.8 808.5,481.8 814.5,479.8 817.5,481.8 814.5,487.8 811.5,493.8 808.5,499.7 803.5,504.7 797.5,507.7 796.6,512.7 791.6,516.6 785.6,517.6 783.6,521.6 785.6,526.6 782.6,530.6 778.6,531.6 774.7,529.6" fill="#FF9800"/><polygon points="700.0,643.1 708.0,639.1 715.9,634.1 721.9,626.1 727.9,620.2 731.9,614.2 732.8,608.2 736.8,605.2 747.8,604.2 759.7,605.6 767.7,607.2 777.6,609.2 785.6,606.2 793.6,609.2 803.5,613.2 808.5,615.2 811.5,620.2 817.5,625.1 820.4,632.1 824.4,636.1 826.4,641.1 830.4,647.0 834.4,651.0 835.4,655.0 835.4,659.0 696.0,659.0 696.0,643.1" fill="#FF9800"/><polygon points="747.8,655.0 753.8,648.0 759.7,642.1 764.7,637.1 767.7,631.1 773.7,627.5 785.6,625.5 795.6,626.1 805.5,628.1 810.5,632.1 811.5,637.1 815.5,643.1 818.4,649.0 819.4,655.0 819.4,659.0 747.8,659.0" fill="#FF5000"/><polygon points="848.3,436.0 848.3,440.0 848.3,448.0 846.3,455.9 847.3,461.9 844.3,467.9 837.4,473.8 833.4,479.8 832.4,487.8 827.4,493.8 823.4,499.7 821.4,507.7 819.4,515.6 814.5,521.6 809.5,527.6 807.5,535.6 804.5,541.5 795.6,545.5 793.6,551.5 785.6,557.5 782.6,567.4 782.6,570.4 790.6,570.4 795.6,575.4 803.5,577.4 807.5,577.4 811.5,583.3 819.4,588.3 823.4,597.3 830.4,601.2 833.4,607.2 839.4,613.2 843.3,620.2 846.3,627.1 847.3,635.1 851.3,641.1 853.3,647.0 856.3,655.0 856.3,659.0 895.1,659.0 895.1,655.0 896.1,647.0 898.1,639.1 900.1,631.1 903.1,623.1 907.0,617.2 913.0,613.2 919.0,611.2 919.0,436.0" fill="#78FF86"/><polygon points="859.3,436.0 859.3,440.0 860.3,446.0 860.9,453.9 857.3,459.9 855.3,467.9 851.3,474.8 849.3,481.8 847.3,486.8 843.3,491.8 842.3,499.7 835.4,505.7 829.4,513.7 824.4,519.6 820.4,527.6 813.5,535.6 808.5,543.5 808.5,551.5 811.5,559.4 813.5,564.4 819.4,567.4 824.4,575.4 827.4,580.3 835.4,583.3 839.4,590.3 846.3,595.3 849.3,603.2 855.3,609.2 857.3,617.2 861.2,623.1 862.2,631.1 865.2,639.1 866.2,647.0 869.2,655.0 869.2,659.0 884.1,659.0 884.1,655.0 885.1,647.0 886.1,639.1 887.1,631.1 891.1,623.1 896.1,619.2 899.1,613.2 903.1,607.2 909.0,603.2 913.0,601.2 919.0,599.3 919.0,436.0" fill="#28FFD6"/><polygon points="869.2,436.0 869.2,440.0 870.2,446.0 866.2,455.9 864.2,463.9 859.3,471.9 857.3,479.8 851.3,485.8 849.3,493.8 848.3,501.7 843.3,505.7 836.4,508.7 835.4,515.6 836.4,523.6 833.4,531.6 832.4,539.5 831.4,547.5 834.4,553.5 833.4,559.4 836.4,565.4 839.4,573.4 843.3,579.4 847.3,585.3 851.3,591.3 857.3,595.3 861.2,599.3 863.2,607.2 867.2,613.2 871.2,618.2 879.2,619.2 883.1,616.2 886.1,611.2 891.1,607.2 897.1,604.2 899.1,599.3 903.1,595.3 907.0,591.3 913.0,587.3 919.0,585.3 919.0,436.0" fill="#00D0FF"/><polygon points="877.2,436.0 877.2,440.0 875.2,448.0 874.2,455.9 871.2,461.9 865.2,469.9 859.3,477.8 858.3,487.8 857.3,499.7 856.3,509.7 855.3,519.6 854.3,527.6 854.9,535.6 853.3,543.5 852.3,551.5 853.3,561.4 854.3,569.4 857.3,577.4 859.3,583.3 862.2,591.3 865.2,599.3 869.2,604.2 875.2,606.2 881.2,605.2 887.1,599.3 891.1,594.3 897.1,589.3 899.1,583.3 903.1,577.4 906.0,569.4 913.0,562.4 919.0,559.4 919.0,436.0" fill="#0088FF"/><polygon points="886.1,436.0 886.1,440.0 884.1,448.0 882.2,455.9 876.2,463.9 872.2,473.8 871.2,485.8 870.2,497.7 869.2,509.7 868.2,519.6 866.2,529.6 865.2,539.5 865.2,551.5 864.8,563.4 866.2,575.4 869.2,583.3 870.2,591.3 877.2,593.3 882.2,588.3 886.1,581.3 888.1,573.4 890.1,563.4 892.1,553.5 896.1,543.5 896.7,533.6 896.1,523.6 897.1,513.7 896.7,499.7 897.1,487.8 896.1,475.8 896.1,465.9 894.1,455.9 892.7,448.0 891.5,440.0 891.5,436.0" fill="#0038FF"/><polygon points="913.0,630.1 910.0,634.1 911.0,639.1 907.0,645.0 904.1,651.0 903.1,655.0 903.1,659.0 919.0,659.0 919.0,630.1" fill="#FFEC00"/></g><g clip-path="url(#tc_t20)"><rect x="270" y="655" width="215" height="215" fill="#0038FF"/><polygon points="387.5,651.0 387.5,655.0 385.5,665.0 384.5,674.9 385.5,684.9 387.5,694.8 390.4,704.8 391.0,714.7 392.4,721.7 399.4,723.7 403.4,730.6 406.4,736.6 413.3,739.6 417.3,746.6 423.3,752.5 429.3,756.5 435.2,762.5 441.2,768.5 449.2,772.5 457.1,778.4 461.1,784.4 469.1,788.4 477.0,790.4 485.0,794.4 489.0,794.4 489.0,651.0" fill="#0000F0"/><polygon points="429.3,651.0 429.3,655.0 424.3,661.0 422.9,670.9 424.3,680.9 427.3,688.8 429.3,698.8 433.2,708.8 432.2,713.7 439.2,720.7 442.8,728.7 445.2,736.6 451.2,744.6 455.1,752.5 461.1,758.5 469.1,759.5 477.0,762.5 485.0,764.5 489.0,764.5 489.0,710.7 488.6,709.9 482.8,703.0 482.2,695.2 476.4,683.5 470.5,674.3 464.7,664.8 458.9,655.0 458.9,651.0" fill="#0000A0"/><polygon points="467.3,655.0 473.9,661.6 476.4,669.9 482.2,677.1 485.4,686.1 489.0,690.8 489.0,651.0 467.3,651.0" fill="#0038FF"/><polygon points="479.0,655.0 482.8,665.9 488.6,671.9 489.0,672.9 489.0,651.0 479.0,651.0" fill="#0088FF"/><polygon points="395.8,750.6 401.4,753.5 405.4,763.5 413.3,768.5 417.3,776.4 427.3,779.4 431.2,784.4 439.2,788.4 443.2,794.4 453.1,798.3 459.1,804.3 469.1,808.3 477.0,812.3 485.0,813.3 489.0,813.3 489.0,874.0 389.4,874.0 389.4,750.6" fill="#0088FF"/><polygon points="410.3,787.4 415.3,786.4 421.3,792.4 427.3,796.3 435.2,802.3 443.2,806.3 447.2,812.3 455.1,816.2 459.1,822.2 467.1,824.2 477.0,828.2 485.0,829.2 489.0,829.2 489.0,874.0 399.4,874.0 399.4,787.4" fill="#00D0FF"/><polygon points="415.3,801.3 421.3,804.3 427.3,810.3 435.2,814.3 439.2,820.2 447.2,824.2 455.1,828.2 463.1,832.2 471.1,834.2 479.0,836.2 485.0,835.2 489.0,835.2 489.0,874.0 405.4,874.0 405.4,801.3" fill="#28FFD6"/><polygon points="420.3,814.3 425.3,818.2 431.2,821.2 437.2,826.2 445.2,830.2 453.1,834.2 461.1,839.1 469.1,842.1 477.0,843.1 485.0,844.1 489.0,844.1 489.0,874.0 409.4,874.0 409.4,814.3" fill="#78FF86"/><polygon points="424.3,824.2 429.3,826.2 435.2,830.2 441.2,835.2 449.2,838.1 457.1,843.1 465.1,846.1 473.1,849.1 481.0,850.5 489.0,851.1 489.0,874.0 413.3,874.0 413.3,824.2" fill="#C8FF36"/><polygon points="431.2,846.1 435.2,843.1 441.2,845.1 446.2,849.1 449.2,854.1 445.2,857.1 439.2,856.1 434.2,853.1" fill="#FFEC00"/></g><g clip-path="url(#tc_t21)"><rect x="485" y="655" width="215" height="215" fill="#0088FF"/><polygon points="481.0,651.0 481.0,814.3 485.0,814.3 495.0,816.2 502.9,818.2 510.9,820.2 516.9,823.2 521.8,816.2 523.8,806.3 524.8,794.4 527.6,790.0 528.2,773.8 528.8,762.5 528.2,752.5 525.0,742.6 522.4,732.4 520.0,725.1 513.7,721.3 508.1,711.3 504.9,702.6 501.3,700.0 495.6,693.8 495.6,687.4 491.2,680.1 488.2,672.5 485.0,669.9 485.0,651.0" fill="#0038FF"/><polygon points="481.0,688.8 485.0,688.8 488.8,692.4 493.8,698.8 496.9,706.2 502.5,712.5 506.3,720.1 510.1,726.3 508.7,730.1 513.7,736.2 515.1,745.0 516.3,754.9 516.9,763.7 516.9,773.8 515.1,781.2 515.1,790.0 509.9,798.3 504.9,802.3 496.9,799.3 491.0,800.3 485.0,798.3 481.0,798.3" fill="#0000F0"/><polygon points="481.0,705.0 485.0,705.0 490.0,711.3 495.0,716.3 497.5,721.3 496.3,730.1 499.9,736.2 501.9,745.0 501.9,754.9 499.9,762.5 496.9,768.7 492.6,772.5 488.8,771.9 485.0,769.5 481.0,769.5" fill="#0000A0"/><polygon points="481.0,651.0 481.0,657.6 485.0,657.6 488.8,661.2 491.2,668.7 496.3,673.7 495.6,680.1 498.7,685.1 504.9,686.3 507.5,692.4 511.3,705.0 516.3,712.5 521.2,722.5 527.6,726.3 532.0,730.1 532.6,735.0 535.0,742.6 537.6,751.4 539.9,758.7 540.5,767.5 539.3,777.4 538.8,790.0 539.7,794.4 544.7,801.3 550.7,804.3 558.7,802.3 564.6,799.3 572.6,798.3 580.6,795.3 588.5,792.4 596.5,791.4 604.4,790.4 612.4,793.4 618.4,795.3 624.4,794.4 704.0,754.5 704.0,651.0" fill="#00D0FF"/><polygon points="485.0,828.2 493.0,830.2 500.9,833.2 508.9,836.2 513.9,837.2 513.9,874.0 481.0,874.0 481.0,828.2" fill="#00D0FF"/><polygon points="485.0,840.1 490.0,841.1 495.9,844.1 495.9,874.0 481.0,874.0 481.0,840.1" fill="#28FFD6"/><polygon points="493.8,651.0 493.8,655.0 495.6,662.6 501.3,667.5 503.7,673.7 508.1,677.5 510.1,685.1 515.1,692.4 518.8,696.2 521.2,703.8 526.2,708.8 531.2,713.7 533.2,720.1 535.0,726.3 539.9,733.8 544.9,737.4 546.3,741.2 544.9,746.2 550.1,750.0 547.5,754.9 551.3,762.5 552.5,770.1 555.1,776.2 560.1,781.2 566.2,785.0 572.6,785.6 580.0,782.6 588.7,781.8 597.5,782.6 605.0,783.8 613.8,786.2 620.0,787.6 628.3,790.4 634.3,790.0 704.0,762.5 704.0,651.0" fill="#28FFD6"/><polygon points="503.3,651.0 503.3,655.0 508.7,662.6 508.1,668.7 513.7,674.9 518.8,683.7 522.4,691.2 528.8,696.2 535.0,700.0 538.8,707.6 543.7,713.7 546.3,721.3 552.5,730.1 556.3,736.2 555.1,745.0 561.2,751.4 565.0,760.1 572.6,766.3 580.0,770.1 587.5,773.1 595.1,773.8 602.5,776.2 610.0,774.4 620.0,776.8 624.4,779.4 630.3,782.4 638.3,784.4 645.3,785.4 704.0,762.5 704.0,651.0" fill="#78FF86"/><polygon points="511.3,651.0 511.3,655.0 517.4,662.6 521.2,669.9 522.4,680.1 527.6,685.1 533.8,687.4 535.0,696.2 539.9,702.6 544.9,707.6 547.5,716.3 552.5,722.5 557.5,725.1 560.1,732.4 567.4,736.2 572.6,745.0 575.0,752.5 581.4,758.7 588.7,763.7 596.3,765.1 603.8,768.1 611.2,768.7 620.0,773.1 628.3,773.4 636.3,776.4 644.3,774.4 652.2,778.4 657.2,780.8 704.0,762.5 704.0,651.0" fill="#C8FF36"/><polygon points="519.6,651.0 519.6,655.0 526.2,665.0 532.6,671.3 533.8,678.7 541.3,681.9 547.5,687.4 552.5,695.0 561.2,700.0 562.4,705.0 571.2,708.8 573.8,713.7 576.2,720.1 582.5,722.5 588.7,728.7 592.5,736.2 597.5,741.2 600.1,748.8 603.8,756.3 610.0,760.1 616.2,761.3 620.0,763.7 632.3,760.5 639.3,763.5 646.2,766.5 654.2,772.5 662.2,774.4 671.1,775.4 704.0,762.5 704.0,651.0" fill="#FFEC00"/><polygon points="676.1,651.0 676.1,655.0 672.1,658.0 664.2,663.0 654.2,666.9 644.3,668.9 632.3,669.9 624.4,672.9 620.0,672.5 615.0,670.5 608.8,673.1 601.3,674.9 593.7,674.3 590.1,671.3 584.9,673.1 580.0,672.5 573.8,673.1 570.6,675.7 572.6,681.3 577.6,685.1 582.5,686.3 586.3,691.2 588.7,697.6 593.7,702.6 596.3,707.6 601.3,711.3 605.0,717.5 610.0,723.7 613.8,728.9 615.0,735.0 615.6,739.4 620.0,740.6 622.4,744.6 626.3,752.5 634.3,756.5 642.3,758.5 648.2,762.5 656.2,765.5 664.2,768.5 672.1,770.5 682.1,771.1 704.0,762.5 704.0,651.0" fill="#FF9800"/><polygon points="700.0,693.8 692.0,694.8 682.1,697.8 672.1,697.8 664.2,701.8 656.2,707.8 644.3,708.8 634.3,711.7 631.3,716.7 633.3,724.7 636.3,730.6 638.3,738.6 637.3,744.6 644.3,750.6 650.2,752.5 656.2,758.5 664.2,760.5 672.1,763.5 680.1,765.5 688.1,766.5 694.0,766.5 704.0,762.5 704.0,693.8" fill="#FF5000"/><polygon points="700.0,721.7 692.0,723.7 684.1,725.7 676.1,727.7 668.1,729.7 663.2,734.6 663.2,742.6 665.2,750.6 672.1,754.5 680.1,758.5 686.1,761.5 692.0,762.5 698.0,763.5 704.0,763.5 704.0,721.7" fill="#F80000"/></g><g clip-path="url(#tc_t22)"><rect x="700" y="655" width="215" height="215" fill="#FF5000"/><polygon points="700.0,691.8 706.0,686.9 715.9,682.9 717.9,674.9 725.9,670.9 731.9,667.9 738.8,663.0 739.8,658.0 743.8,655.0 743.8,651.0 696.0,651.0 696.0,691.8" fill="#FF9800"/><polygon points="700.0,719.7 707.0,718.3 710.9,721.7 715.9,720.7 721.9,726.7 727.9,731.6 732.8,736.6 736.8,741.6 734.8,748.6 734.8,750.6 700.0,766.5 696.0,766.5 696.0,719.7" fill="#F80000"/><polygon points="820.4,651.0 820.4,655.0 819.4,663.0 819.4,670.9 816.5,680.9 813.5,690.8 813.5,697.8 810.5,704.8 815.5,710.7 819.4,716.7 819.4,722.7 827.4,724.7 833.4,729.7 836.4,731.6 836.4,734.6 872.2,734.6 872.2,731.6 875.2,726.7 880.2,723.7 885.1,718.7 887.1,712.7 891.1,708.8 895.1,704.8 897.1,697.8 900.1,690.8 903.1,684.9 908.0,680.9 913.0,678.9 919.0,676.9 919.0,651.0" fill="#FF9800"/><polygon points="837.4,651.0 837.4,655.0 839.4,661.0 840.3,666.9 837.4,674.9 838.4,680.9 834.4,688.8 835.4,695.8 831.4,702.8 832.4,708.8 837.4,713.7 839.4,720.7 847.3,723.7 855.3,724.7 865.2,723.7 873.2,721.7 875.2,716.7 880.2,712.7 884.1,708.8 888.1,702.8 889.1,696.8 894.1,690.8 897.1,682.9 899.1,676.9 903.1,672.9 908.0,667.9 913.0,665.9 919.0,664.0 919.0,651.0" fill="#FFEC00"/><polygon points="848.3,651.0 848.3,655.0 849.3,661.0 851.3,668.9 848.3,676.9 849.3,682.9 846.3,690.8 847.3,697.8 848.3,704.8 853.3,707.8 859.3,711.7 867.2,710.7 875.2,707.8 880.2,702.8 883.1,697.8 884.1,691.8 889.1,686.9 892.1,680.9 896.1,674.9 898.1,667.9 901.1,661.0 903.1,655.0 903.1,651.0" fill="#C8FF36"/><polygon points="860.3,651.0 860.3,655.0 862.2,661.0 859.3,668.9 862.2,674.9 863.2,680.9 860.3,686.9 859.3,694.8 863.2,697.2 869.2,698.4 875.2,696.8 877.2,690.8 879.2,684.9 883.1,679.9 884.1,673.9 887.1,668.9 890.1,663.0 892.1,659.0 894.1,655.0 894.1,651.0" fill="#78FF86"/><polygon points="869.2,651.0 869.2,655.0 871.2,659.0 875.2,662.0 878.2,659.0 880.2,655.0 880.2,651.0" fill="#28FFD6"/><polygon points="913.0,691.8 908.0,696.8 905.0,702.8 901.1,708.8 900.1,714.7 896.1,718.7 891.1,724.7 887.1,727.7 883.1,731.6 883.1,734.6 919.0,734.6 919.0,691.8" fill="#F80000"/><polygon points="913.0,711.7 908.0,713.7 904.1,718.7 902.1,724.7 900.1,731.6 900.1,734.6 919.0,734.6 919.0,711.7" fill="#FF5000"/><polygon points="913.0,714.7 909.0,715.7 906.0,719.7 905.0,724.7 904.1,731.6 904.1,734.6 919.0,734.6 919.0,714.7" fill="#FF9800"/><polygon points="913.0,727.7 909.0,729.1 907.4,731.6 907.4,734.6 919.0,734.6 919.0,727.7" fill="#FFEC00"/></g></g><rect x="297.5" y="414.5" width="6" height="6" fill="#00CC00" stroke="#000"/><rect x="304" y="405" width="9" height="12" fill="#fff" /><text x="305" y="415" font-size="11" fill="#008000" font-weight="bold" >4</text><rect x="654.5" y="640.5" width="6" height="6" fill="#00CC00" stroke="#000"/><rect x="661" y="631" width="9" height="12" fill="#fff" /><text x="662" y="641" font-size="11" fill="#008000" font-weight="bold" >3</text><rect x="949.5" y="456.5" width="6" height="6" fill="#00CC00" stroke="#000"/><rect x="956" y="447" width="9" height="12" fill="#fff" /><text x="957" y="457" font-size="11" fill="#008000" font-weight="bold" >5</text><rect x="930.5" y="819.5" width="6" height="6" fill="#00CC00" stroke="#000"/><rect x="937" y="810" width="9" height="12" fill="#fff" /><text x="938" y="820" font-size="11" fill="#008000" font-weight="bold" >2</text><rect x="475.5" y="885.5" width="6" height="6" fill="#00CC00" stroke="#000"/><rect x="482" y="876" width="9" height="12" fill="#fff" /><text x="483" y="886" font-size="11" fill="#008000" font-weight="bold" >1</text><g shape-rendering="auto"><path d="M439.500 865.500V837M435 845l4.500-8 4.500 8" stroke="#22B422" fill="none"/><path d="M439.500 865.500H469M461 861l8 4.500-8 4.500" stroke="#F01010" fill="none"/></g><text x="439" y="827" font-size="13" fill="#22B422" font-family="Liberation Serif" font-weight="bold" font-style="italic" >y</text><text x="476.5" y="865" font-size="13" fill="#E01010" font-family="Liberation Serif" font-weight="bold" font-style="italic" >x</text><rect x="271" y="865" width="5" height="1" fill="#b0b0b0" /><rect x="273" y="863" width="1" height="5" fill="#b0b0b0" /><rect x="910" y="865" width="5" height="1" fill="#b0b0b0" /><rect x="912" y="863" width="1" height="5" fill="#b0b0b0" /><rect x="910" y="231" width="5" height="1" fill="#b0b0b0" /><rect x="912" y="229" width="1" height="5" fill="#b0b0b0" /><g shape-rendering="auto"><ellipse cx="640" cy="482.5" rx="4.5" ry="1.7" fill="#efefef" stroke="#7a7a7a" stroke-width="0.9" transform="rotate(-12 640 482.5)"/><ellipse cx="640" cy="486.5" rx="4.5" ry="1.7" fill="#efefef" stroke="#7a7a7a" stroke-width="0.9" transform="rotate(-12 640 486.5)"/><ellipse cx="640" cy="490.5" rx="4.5" ry="1.7" fill="#efefef" stroke="#7a7a7a" stroke-width="0.9" transform="rotate(-12 640 490.5)"/><ellipse cx="640" cy="494.5" rx="4.5" ry="1.7" fill="#efefef" stroke="#7a7a7a" stroke-width="0.9" transform="rotate(-12 640 494.5)"/></g>
<rect x="1174" y="143" width="16" height="837" fill="#F0F0F0" />
<rect x="8" y="964" width="1182" height="16" fill="#F0F0F0" />
<rect x="1174" y="207" width="15" height="704" fill="#CDCDCD" />
<rect x="197" y="964" width="896" height="15" fill="#CDCDCD" />
<path d="M1178 155l3.500-4 3.500 4" stroke="#555" stroke-width="1.8" fill="none" shape-rendering="auto"/>
<path d="M1178 952.500l3.500 4 3.500-4" stroke="#555" stroke-width="1.8" fill="none" shape-rendering="auto"/>
<path d="M18.500 968l-4 3.500 4 3.500" stroke="#555" stroke-width="1.8" fill="none" shape-rendering="auto"/>
<path d="M1163 968l4 3.500-4 3.500" stroke="#555" stroke-width="1.8" fill="none" shape-rendering="auto"/>
<rect x="5" y="986" width="1" height="23" fill="#d0d0d0" />
<rect x="213" y="986" width="37" height="23" fill="#fff" />
<rect x="42" y="988" width="1" height="18" fill="#dadada" />
<rect x="126" y="988" width="1" height="18" fill="#dadada" />
<rect x="163" y="988" width="1" height="18" fill="#dadada" />
<rect x="213" y="988" width="1" height="18" fill="#dadada" />
<rect x="250" y="988" width="1" height="18" fill="#dadada" />
<rect x="283" y="988" width="1" height="18" fill="#dadada" />
<rect x="316" y="988" width="1" height="18" fill="#dadada" />
<rect x="350" y="988" width="1" height="18" fill="#dadada" />
<rect x="384" y="988" width="1" height="18" fill="#dadada" />
<rect x="416" y="988" width="1" height="18" fill="#dadada" />
<text x="11" y="1000" font-size="11" fill="#000" textLength="25" lengthAdjust="spacingAndGlyphs" >План</text>
<text x="49" y="1000" font-size="11" fill="#000" textLength="71.5" lengthAdjust="spacingAndGlyphs" >Верхний грунт</text>
<text x="132.5" y="1000" font-size="11" fill="#000" textLength="24.5" lengthAdjust="spacingAndGlyphs" >Срез</text>
<text x="170" y="1000" font-size="11" fill="#000" textLength="38" lengthAdjust="spacingAndGlyphs" >Рельеф</text>
<text x="223.5" y="1002.5" font-size="13" fill="#000" font-family="Liberation Serif" font-weight="bold" >C</text><text x="233" y="1005" font-size="8.5" fill="#000" font-family="Liberation Serif" font-weight="bold" >0</text>
<text x="257" y="1001" font-size="13" fill="#000" font-family="Liberation Serif" font-weight="bold" >C</text><text x="267" y="1003.5" font-size="8.5" fill="#000" font-family="Liberation Serif" font-weight="bold" >1</text>
<text x="291" y="1001" font-size="13" fill="#000" font-family="Liberation Serif" font-weight="bold" >C</text><text x="301" y="1003.5" font-size="8.5" fill="#000" font-family="Liberation Serif" font-weight="bold" >2</text>
<text x="324" y="1001" font-size="13" fill="#000" font-family="Liberation Serif" font-weight="bold" >H</text><text x="334.5" y="1003" font-size="7.5" fill="#000" font-family="Liberation Serif" font-weight="bold" >c</text>
<text x="360.5" y="1002" font-size="13.5" fill="#000" font-family="Liberation Serif" font-weight="bold" >E</text>
<rect x="361" y="990" width="9" height="1" fill="#000" />
<text x="394" y="1002" font-size="13.5" fill="#000" font-family="Liberation Serif" font-weight="bold" >V</text>
<rect x="394" y="990" width="10" height="1" fill="#000" />
<!-- right -->
<rect x="1204.5" y="119.5" width="1708" height="28" fill="none" stroke="#DCDCDC"/>
<rect x="1211.5" y="124.5" width="15" height="12" fill="#fafaff" stroke="#9a9ad0"/><rect x="1212" y="125" width="14" height="2" fill="#7b7be0"/>
<g shape-rendering="auto"><ellipse cx="1220" cy="127.4" rx="4.0" ry="1.5" fill="#efefef" stroke="#8a8a8a" stroke-width="0.8" transform="rotate(-12 1220 127.4)"/><ellipse cx="1220" cy="131.0" rx="4.0" ry="1.5" fill="#efefef" stroke="#8a8a8a" stroke-width="0.8" transform="rotate(-12 1220 131.0)"/><ellipse cx="1220" cy="134.6" rx="4.0" ry="1.5" fill="#efefef" stroke="#8a8a8a" stroke-width="0.8" transform="rotate(-12 1220 134.6)"/><ellipse cx="1220" cy="138.2" rx="4.0" ry="1.5" fill="#efefef" stroke="#8a8a8a" stroke-width="0.8" transform="rotate(-12 1220 138.2)"/></g>
<text x="1508.5" y="139" font-size="11" fill="#000" textLength="91" lengthAdjust="spacingAndGlyphs" >Результат в точке</text>
<rect x="1849.5" y="122.5" width="30" height="20" fill="#E1E1E1" stroke="#ADADAD"/>
<rect x="1881.5" y="122.5" width="30" height="20" fill="#E1E1E1" stroke="#ADADAD"/>
<g shape-rendering="auto"><rect x="1857.500" y="128.500" width="13" height="10" rx="1.5" fill="#d9d9d9" stroke="#8e8e8e"/><rect x="1859" y="127" width="4" height="2" fill="#bdbdbd"/><circle cx="1864" cy="134" r="2.6" fill="#555" stroke="#eee" stroke-width=".8"/></g>
<text x="1896.5" y="139" font-size="19" fill="#1f7a1f" font-family="Liberation Serif" font-weight="bold" text-anchor="middle" >?</text>
<rect x="1204.5" y="156.5" width="1708" height="34" fill="none" stroke="#DCDCDC"/>
<rect x="1206" y="150" width="82" height="14" fill="#F0F0F0" />
<rect x="1208.5" y="150.500" width="12" height="12" fill="#fff" stroke="#333"/>
<text x="1222.5" y="161" font-size="11" fill="#000" textLength="62" lengthAdjust="spacingAndGlyphs" >Координаты</text>
<text x="1454" y="182" font-size="12" fill="#000" >X</text>
<rect x="1466.5" y="167.5" width="40" height="19" fill="#F0F0F0" stroke="#7A7A7A"/>
<text x="1469.5" y="181" font-size="11" fill="#000" textLength="33" lengthAdjust="spacingAndGlyphs" >15.315</text>
<text x="1509.5" y="181" font-size="11" fill="#1a1a1a" font-family="Liberation Serif" font-weight="bold" textLength="8" lengthAdjust="spacingAndGlyphs" >м</text>
<text x="1549.5" y="182" font-size="12" fill="#000" >Y</text>
<rect x="1560.5" y="167.5" width="40" height="19" fill="#F0F0F0" stroke="#7A7A7A"/>
<text x="1563.5" y="181" font-size="11" fill="#000" textLength="33" lengthAdjust="spacingAndGlyphs" >28.270</text>
<text x="1603.5" y="181" font-size="11" fill="#1a1a1a" font-family="Liberation Serif" font-weight="bold" textLength="8" lengthAdjust="spacingAndGlyphs" >м</text>
<rect x="1878.500" y="163.500" width="30" height="20" fill="#CCE4F7" stroke="#005499"/>
<g shape-rendering="auto"><ellipse cx="1893.5" cy="169.7" rx="4.3" ry="1.6" fill="#efefef" stroke="#8a8a8a" stroke-width="0.9" transform="rotate(-12 1893.5 169.7)"/><ellipse cx="1893.5" cy="173.5" rx="4.3" ry="1.6" fill="#efefef" stroke="#8a8a8a" stroke-width="0.9" transform="rotate(-12 1893.5 173.5)"/><ellipse cx="1893.5" cy="177.3" rx="4.3" ry="1.6" fill="#efefef" stroke="#8a8a8a" stroke-width="0.9" transform="rotate(-12 1893.5 177.3)"/><ellipse cx="1893.5" cy="181.1" rx="4.3" ry="1.6" fill="#efefef" stroke="#8a8a8a" stroke-width="0.9" transform="rotate(-12 1893.5 181.1)"/></g>
<rect x="1205.5" y="220.500" width="1706" height="783" fill="#F0F0F0" stroke="#DCDCDC"/>
<rect x="1207.5" y="199.500" width="98" height="22" fill="#fff" stroke="#DCDCDC"/>
<rect x="1208" y="220" width="97" height="2" fill="#fff" />
<text x="1215.5" y="212.5" font-size="11" fill="#000" textLength="84" lengthAdjust="spacingAndGlyphs" >Метод Савинова</text>
<clipPath id="ic"><rect x="1815" y="0" width="41.5" height="1080"/></clipPath>
<rect x="1814.5" y="282.5" width="43" height="20" fill="#F0F0F0" stroke="#7A7A7A"/>
<g clip-path="url(#ic)"><text x="1818" y="296" font-size="11" fill="#000" textLength="39" lengthAdjust="spacingAndGlyphs" >1098.43</text></g>
<text x="1797" y="299" font-size="14" fill="#000" font-family="Liberation Serif" font-weight="bold" >C</text><text x="1807.08" y="301.5" font-size="8.5" fill="#000" font-family="Liberation Serif" font-weight="bold" >0</text>
<text x="1869" y="297" font-size="11" fill="#222" font-family="Liberation Mono" font-weight="bold" >т/м³</text>
<rect x="1814.5" y="417.5" width="43" height="20" fill="#F0F0F0" stroke="#7A7A7A"/>
<g clip-path="url(#ic)"><text x="1818" y="431" font-size="11" fill="#000" textLength="39" lengthAdjust="spacingAndGlyphs" >37653.7</text></g>
<text x="1797" y="434" font-size="14" fill="#000" font-family="Liberation Serif" font-weight="bold" >C</text><text x="1807.08" y="436.5" font-size="8.5" fill="#000" font-family="Liberation Serif" font-weight="bold" >1</text>
<text x="1869" y="432" font-size="11" fill="#222" font-family="Liberation Mono" font-weight="bold" >т/м³</text>
<rect x="1814.5" y="471.5" width="43" height="20" fill="#F0F0F0" stroke="#7A7A7A"/>
<g clip-path="url(#ic)"><text x="1818" y="485" font-size="11" fill="#000" textLength="39" lengthAdjust="spacingAndGlyphs" >389278.</text></g>
<text x="1797" y="488" font-size="14" fill="#000" font-family="Liberation Serif" font-weight="bold" >C</text><text x="1807.08" y="490.5" font-size="8.5" fill="#000" font-family="Liberation Serif" font-weight="bold" >2</text>
<text x="1869" y="486" font-size="11" fill="#222" font-family="Liberation Mono" font-weight="bold" >т/м</text>
<rect x="1814.5" y="608.5" width="43" height="20" fill="#F0F0F0" stroke="#7A7A7A"/>
<g clip-path="url(#ic)"><text x="1818" y="622" font-size="11" fill="#000" textLength="21" lengthAdjust="spacingAndGlyphs" >32.0</text></g>
<text x="1796" y="625" font-size="14" fill="#000" font-family="Liberation Serif" font-weight="bold" >H</text><text x="1807.5" y="627" font-size="8" fill="#000" font-family="Liberation Serif" font-weight="bold" >c</text>
<text x="1869" y="623" font-size="11" fill="#222" font-family="Liberation Mono" font-weight="bold" > м</text>
<rect x="1814.5" y="754.5" width="43" height="20" fill="#F0F0F0" stroke="#7A7A7A"/>
<g clip-path="url(#ic)"><text x="1818" y="768" font-size="11" fill="#000" textLength="27" lengthAdjust="spacingAndGlyphs" >0.000</text></g>
<text x="1798" y="772" font-size="14" fill="#000" font-family="Liberation Serif" font-weight="bold" >E</text>
<rect x="1799" y="759" width="8" height="1" fill="#000" />
<text x="1869" y="769" font-size="11" fill="#222" font-family="Liberation Mono" font-weight="bold" >т/м²</text>
<rect x="1814.5" y="904.5" width="43" height="20" fill="#F0F0F0" stroke="#7A7A7A"/>
<g clip-path="url(#ic)"><text x="1818" y="918" font-size="11" fill="#000" textLength="27" lengthAdjust="spacingAndGlyphs" >0.318</text></g>
<text x="1797.5" y="366" font-size="11" fill="#000" textLength="77" lengthAdjust="spacingAndGlyphs" >Коэффициенты</text>
<text x="1797.5" y="379" font-size="11" fill="#000" textLength="41" lengthAdjust="spacingAndGlyphs" >постели</text>
<text x="1797.5" y="557" font-size="11" fill="#000" textLength="42" lengthAdjust="spacingAndGlyphs" >Глубина</text>
<text x="1797.5" y="570" font-size="11" fill="#000" textLength="95" lengthAdjust="spacingAndGlyphs" >сжимаемой толщи</text>
<text x="1797.5" y="698" font-size="11" fill="#000" textLength="71" lengthAdjust="spacingAndGlyphs" >Усредненный</text>
<text x="1797.5" y="711" font-size="11" fill="#000" textLength="104" lengthAdjust="spacingAndGlyphs" >модуль деформации</text>
<text x="1797.5" y="850" font-size="11" fill="#000" textLength="102" lengthAdjust="spacingAndGlyphs" >Усредненный коэф-</text>
<text x="1797.5" y="863" font-size="11" fill="#000" textLength="96" lengthAdjust="spacingAndGlyphs" >фициент Пуассона</text>
<!-- section -->
<rect x="1208.500" y="225.500" width="581" height="771" fill="#fff" stroke="#696969"/>
<defs><pattern id="clay" x="1216" y="616" width="32" height="32" patternUnits="userSpaceOnUse"><rect x="2" y="0" width="13" height="1"/><rect x="28" y="6" width="4" height="1"/><rect x="0" y="6" width="9" height="1"/><rect x="18" y="12" width="9" height="1"/><rect x="31" y="15" width="1" height="1"/><rect x="0" y="15" width="8" height="1"/><rect x="9" y="21" width="10" height="1"/><rect x="22" y="24" width="7" height="1"/><rect x="26" y="27" width="6" height="1"/><rect x="0" y="27" width="6" height="1"/></pattern></defs>
<rect x="1217" y="291" width="270" height="16" fill="#008080" />
<rect x="1217" y="307" width="270" height="38" fill="#FFFF80" />
<rect x="1217" y="345" width="540" height="38" fill="#FF8080" />
<rect x="1217" y="383" width="540" height="39" fill="#808000" />
<rect x="1217" y="422" width="540" height="37" fill="#800000" />
<rect x="1217" y="459" width="540" height="49" fill="#808000" />
<rect x="1217" y="508" width="540" height="18" fill="#8080FF" />
<rect x="1217" y="526" width="540" height="86" fill="#FF8040" />
<rect x="1217" y="612" width="540" height="340" fill="#FF0080" />
<rect x="1488" y="343" width="269" height="2" fill="#FFFF80" />
<rect x="1217" y="508" width="540" height="18" fill="url(#clay)" />
<rect x="1217" y="612" width="540" height="340" fill="url(#clay)" />
<rect x="1217" y="289" width="270" height="2" fill="#000" />
<path d="M1222 291l-4 5M1227 291l-4 5M1232 291l-4 5M1252 291l-4 5M1257 291l-4 5M1262 291l-4 5M1282 291l-4 5M1287 291l-4 5M1292 291l-4 5M1312 291l-4 5M1317 291l-4 5M1322 291l-4 5M1342 291l-4 5M1347 291l-4 5M1352 291l-4 5M1372 291l-4 5M1377 291l-4 5M1382 291l-4 5M1402 291l-4 5M1407 291l-4 5M1412 291l-4 5M1432 291l-4 5M1437 291l-4 5M1442 291l-4 5M1462 291l-4 5M1467 291l-4 5M1472 291l-4 5" stroke="#000" stroke-width="1" fill="none" shape-rendering="auto"/>
<text x="1227.5" y="274.5" font-size="11" fill="#000" textLength="46.5" lengthAdjust="spacingAndGlyphs" >+139.693</text>
<rect x="1227" y="277" width="49" height="1" fill="#000" />
<rect x="1227" y="277" width="1" height="12" fill="#000" />
<path d="M1222 283l5.500 6 5.500-6" stroke="#000" stroke-width="2" fill="none" shape-rendering="auto"/>
<line x1="1487.5" y1="234" x2="1487.5" y2="952" stroke="#000" stroke-width="1" stroke-dasharray="18 3 3 3"/>
<rect x="1489" y="258" width="267" height="1" fill="#0000FF" />
<rect x="1489" y="258" width="1" height="85" fill="#0000FF" />
<path d="M1486 336l3.500 7 3.500-7" stroke="#0000FF" stroke-width="1" fill="none" shape-rendering="auto"/>
<rect x="1622" y="258" width="1" height="85" fill="#0000FF" />
<path d="M1619 336l3.500 7 3.500-7" stroke="#0000FF" stroke-width="1" fill="none" shape-rendering="auto"/>
<rect x="1755" y="258" width="1" height="85" fill="#0000FF" />
<path d="M1752 336l3.500 7 3.500-7" stroke="#0000FF" stroke-width="1" fill="none" shape-rendering="auto"/>
<text x="1594" y="255.5" font-size="11" fill="#8080FF" textLength="65" lengthAdjust="spacingAndGlyphs" >P=21.49т/м2</text>
<rect x="1487" y="951" width="295" height="1" fill="#000" />
<polyline points="1487,291 1460,343 1442,383 1420,422 1400,459 1373,508 1370,525 1364,526 1322,612 1222,952" stroke="#0000FF" stroke-width="2" fill="none" shape-rendering="auto"/>
<polyline points="1598,343 1597.5,422 1596,459 1593,508 1592,526 1582,612 1540,952" stroke="#0000FF" stroke-width="2" fill="none" shape-rendering="auto"/>
<rect x="1427" y="362" width="176" height="1" fill="#000" />
<rect x="1460" y="341" width="1" height="25" fill="#000" />
<rect x="1598" y="343" width="1" height="22" fill="#000" />
<path d="M1457.5 365.5l6-6" stroke="#000" stroke-width="2" shape-rendering="auto"/>
<path d="M1484.5 365.5l6-6" stroke="#000" stroke-width="2" shape-rendering="auto"/>
<path d="M1595.5 365.5l6-6" stroke="#000" stroke-width="2" shape-rendering="auto"/>
<text x="1427" y="356.5" font-size="11" fill="#000" textLength="27" lengthAdjust="spacingAndGlyphs" >5.188</text>
<text x="1528" y="356.5" font-size="11" fill="#000" textLength="27.5" lengthAdjust="spacingAndGlyphs" >21.49</text>
<rect x="1778" y="290" width="1" height="662" fill="#000" />
<rect x="1758" y="290" width="23" height="1" fill="#000" />
<rect x="1758" y="341" width="23" height="1" fill="#000" />
<path d="M1775.5 287.5l6 6" stroke="#000" stroke-width="2" shape-rendering="auto"/>
<path d="M1775.5 338.5l6 6" stroke="#000" stroke-width="2" shape-rendering="auto"/>
<path d="M1775.5 948.5l6 6" stroke="#000" stroke-width="2" shape-rendering="auto"/>
<text transform="translate(1775.5 395) rotate(-90)" font-size="11" fill="#8080FF" textLength="53" lengthAdjust="spacingAndGlyphs">ho=2.693м</text>
<text transform="translate(1775.5 667) rotate(-90)" font-size="11" fill="#8080FF" textLength="40" lengthAdjust="spacingAndGlyphs">Hc=32м</text>
<rect x="1217" y="986" width="327" height="1" fill="#000" />
<rect x="1222" y="965" width="1" height="26" fill="#000" />
<path d="M1219.5 989.5l6-6" stroke="#000" stroke-width="2" shape-rendering="auto"/>
<rect x="1487" y="965" width="1" height="26" fill="#000" />
<path d="M1484.5 989.5l6-6" stroke="#000" stroke-width="2" shape-rendering="auto"/>
<rect x="1540" y="965" width="1" height="26" fill="#000" />
<path d="M1537.5 989.5l6-6" stroke="#000" stroke-width="2" shape-rendering="auto"/>
<text x="1337" y="980.5" font-size="11" fill="#8080FF" textLength="33.5" lengthAdjust="spacingAndGlyphs" >51.522</text>
<text x="1496.5" y="980.5" font-size="11" fill="#8080FF" textLength="33" lengthAdjust="spacingAndGlyphs" >10.349</text>
<text x="1618.5" y="963" font-size="11" fill="#8080FF" textLength="134.5" lengthAdjust="spacingAndGlyphs" >Граница сжимаемой толщи</text>
<!-- toolbar -->
<defs><linearGradient id="act" x1="0" y1="0" x2="0" y2="1"><stop offset="0" stop-color="#FDDDB3"/><stop offset=".3" stop-color="#FDD9A8"/><stop offset=".32" stop-color="#FBAF4F"/><stop offset=".6" stop-color="#FCCB74"/><stop offset="1" stop-color="#FEEBA2"/></linearGradient><linearGradient id="gsq" x1="0" y1="0" x2="1" y2="1"><stop offset="0" stop-color="#E4EBA0"/><stop offset=".5" stop-color="#B9C84E"/><stop offset="1" stop-color="#94AB26"/></linearGradient><linearGradient id="pg" x1="0" y1="1" x2="1" y2="0"><stop offset="0" stop-color="#CFE9F7"/><stop offset=".5" stop-color="#5FB0DC"/><stop offset="1" stop-color="#2F86C5"/></linearGradient><radialGradient id="glass" cx=".4" cy=".35" r=".7"><stop offset="0" stop-color="#F3F8FD"/><stop offset="1" stop-color="#A9C6E6"/></radialGradient><linearGradient id="paper" x1="0" y1="0" x2="0" y2="1"><stop offset="0" stop-color="#E4E6E8"/><stop offset="1" stop-color="#FFFFFF"/></linearGradient><linearGradient id="fold" x1="0" y1="0" x2="0" y2="1"><stop offset="0" stop-color="#FCE7A4"/><stop offset="1" stop-color="#F6C85A"/></linearGradient><linearGradient id="red1" x1="0" y1="0" x2="0" y2="1"><stop offset="0" stop-color="#D81B45"/><stop offset="1" stop-color="#8E1C2A"/></linearGradient></defs>
<rect x="1295" y="51" width="42" height="43" rx="1.5" fill="url(#act)"/><rect x="1295" y="51" width="42" height="1" fill="#E3C59B"/><rect x="1295" y="93" width="42" height="1" fill="#FFF4C4"/>
<rect x="1391" y="51" width="42" height="43" rx="1.5" fill="url(#act)"/><rect x="1391" y="51" width="42" height="1" fill="#E3C59B"/><rect x="1391" y="93" width="42" height="1" fill="#FFF4C4"/>
<rect x="1435" y="51" width="42" height="43" rx="1.5" fill="url(#act)"/><rect x="1435" y="51" width="42" height="1" fill="#E3C59B"/><rect x="1435" y="93" width="42" height="1" fill="#FFF4C4"/>
<rect x="1479" y="51" width="42" height="43" rx="1.5" fill="url(#act)"/><rect x="1479" y="51" width="42" height="1" fill="#E3C59B"/><rect x="1479" y="93" width="42" height="1" fill="#FFF4C4"/>
<rect x="1567" y="51" width="42" height="43" rx="1.5" fill="url(#act)"/><rect x="1567" y="51" width="42" height="1" fill="#E3C59B"/><rect x="1567" y="93" width="42" height="1" fill="#FFF4C4"/>
<rect x="1743" y="51" width="42" height="43" rx="1.5" fill="url(#act)"/><rect x="1743" y="51" width="42" height="1" fill="#E3C59B"/><rect x="1743" y="93" width="42" height="1" fill="#FFF4C4"/>
<rect x="1787" y="51" width="42" height="43" rx="1.5" fill="url(#act)"/><rect x="1787" y="51" width="42" height="1" fill="#E3C59B"/><rect x="1787" y="93" width="42" height="1" fill="#FFF4C4"/>
<rect x="506" y="59" width="1" height="28" fill="#5f6670" /><rect x="507" y="59" width="1" height="28" fill="#fff" />
<rect x="647" y="59" width="1" height="28" fill="#5f6670" /><rect x="648" y="59" width="1" height="28" fill="#fff" />
<rect x="830" y="59" width="1" height="28" fill="#5f6670" /><rect x="831" y="59" width="1" height="28" fill="#fff" />
<rect x="1113" y="59" width="1" height="28" fill="#5f6670" /><rect x="1114" y="59" width="1" height="28" fill="#fff" />
<rect x="1385" y="59" width="1" height="28" fill="#5f6670" /><rect x="1386" y="59" width="1" height="28" fill="#fff" />
<rect x="1833" y="59" width="1" height="28" fill="#5f6670" /><rect x="1834" y="59" width="1" height="28" fill="#fff" />
<rect x="1011" y="49" width="1" height="46" fill="#8a9099" />
<rect x="1016" y="58" width="2" height="2" fill="#1f1f1f" />
<rect x="1017" y="59" width="1" height="1" fill="#fff" />
<rect x="1016" y="62" width="2" height="2" fill="#1f1f1f" />
<rect x="1017" y="63" width="1" height="1" fill="#fff" />
<rect x="1016" y="66" width="2" height="2" fill="#1f1f1f" />
<rect x="1017" y="67" width="1" height="1" fill="#fff" />
<rect x="1016" y="70" width="2" height="2" fill="#1f1f1f" />
<rect x="1017" y="71" width="1" height="1" fill="#fff" />
<rect x="1016" y="74" width="2" height="2" fill="#1f1f1f" />
<rect x="1017" y="75" width="1" height="1" fill="#fff" />
<rect x="1016" y="78" width="2" height="2" fill="#1f1f1f" />
<rect x="1017" y="79" width="1" height="1" fill="#fff" />
<rect x="1016" y="82" width="2" height="2" fill="#1f1f1f" />
<rect x="1017" y="83" width="1" height="1" fill="#fff" />
<g shape-rendering="auto"><path d="M21.500 59.500h16l7 7v20h-23z" fill="url(#paper)" stroke="#b9bcc0"/><path d="M37.500 59.500v7h7" fill="#f6f6f6" stroke="#b9bcc0"/></g>
<g shape-rendering="auto"><path d="M62.500 86.500v-19h7l2 2h15v17z" fill="#F7D06A" stroke="#D9952B"/><path d="M62.500 86.500l4-12h10l2-2h13l-4 14z" fill="url(#fold)" stroke="#D9952B"/><path d="M69 70q3-10 12-9q6 1 9 7" stroke="#2F4F96" stroke-width="2.600" fill="none"/><path d="M93 70l-7-1 5-6z" fill="#2F4F96"/></g>
<g shape-rendering="auto"><rect x="106" y="57" width="32" height="29" rx="2" fill="#1b1d22"/><rect x="110" y="58" width="22" height="14" fill="#EEF1F6"/><path d="M112 61.500h18M112 64.500h18M112 67.500h18" stroke="#c3c8d2" stroke-width="1"/><rect x="113" y="75" width="16" height="11" fill="#b8b8b4"/><rect x="116" y="77" width="4" height="8" fill="#1b1d22"/></g>
<g shape-rendering="auto"><path d="M470 86h18l8-8h-18z" fill="#4FA6D8" stroke="#1E5E9E" stroke-width=".8"/><path d="M480.5 62H483.5V75.5H486.5L482 81L477.5 75.5H480.5z" fill="#3E3A8C" shape-rendering="auto"/><path d="M472 59q9 8 18 26M490 58q-12 12-18 27" stroke="#B02A2A" stroke-width="3.200" fill="none" opacity=".92"/></g>
<g shape-rendering="auto"><path d="M520.5 84.5V62.5" stroke="#0E7A3B" stroke-width="1.3"/><path d="M520.5 58.5l2.500 7h-5z" fill="#0E7A3B"/><path d="M520.5 84.5H544.0" stroke="#C8201F" stroke-width="1.3"/><path d="M548.0 84.5l-7-2.500v5z" fill="#C8201F"/></g>
<g shape-rendering="auto" fill="#3E3A8C" stroke="#3E3A8C"><path d="M536 60v18M527 69h18" stroke-width="2.200" fill="none"/><path d="M536 58l3.500 5h-7zM536 80l3.500-5h-7zM525 69l5-3.500v7zM547 69l-5-3.500v7z" stroke="none"/></g>
<g shape-rendering="auto"><path d="M564.5 84.5V62.5" stroke="#0E7A3B" stroke-width="1.3"/><path d="M564.5 58.5l2.500 7h-5z" fill="#0E7A3B"/><path d="M564.5 84.5H588.0" stroke="#C8201F" stroke-width="1.3"/><path d="M592.0 84.5l-7-2.500v5z" fill="#C8201F"/></g>
<g shape-rendering="auto"><path d="M576 65.500h6q7 0 6 7q-1 5-6 6" stroke="#3E3A8C" stroke-width="3" fill="none"/><path d="M570 65.500l8-5v10z" fill="#3E3A8C"/></g>
<g shape-rendering="auto"><path d="M608.5 84.5V62.5" stroke="#0E7A3B" stroke-width="1.3"/><path d="M608.5 58.5l2.500 7h-5z" fill="#0E7A3B"/><path d="M608.5 84.5H632.0" stroke="#C8201F" stroke-width="1.3"/><path d="M636.0 84.5l-7-2.500v5z" fill="#C8201F"/></g>
<g shape-rendering="auto"><rect x="620.500" y="60" width="13" height="13.500" rx="1" fill="#6d6f73"/><rect x="622.500" y="60.500" width="9" height="6" fill="#D8ECFA"/><rect x="623" y="69" width="8" height="4.500" fill="#e6e6e6"/><rect x="624" y="69.500" width="2" height="3.500" fill="#555"/></g>
<g fill="none" stroke="#3E3A8C" stroke-width="2"><rect x="666" y="66" width="14" height="14"/><path d="M659 73h7M680 73h7M673 59v7M673 80v7"/></g><path d="M669.500 73h7M673 69.500v7" stroke="#111" stroke-width="1.600"/>
<g fill="none" stroke="#3E3A8C" stroke-width="2"><rect x="707" y="63" width="20" height="20"/><path d="M703 73h4M727 73h4M717 59v4M717 83v4"/></g><g shape-rendering="auto"><path d="M712 78l10-10" stroke="#222" stroke-width="1.600"/><path d="M724.500 65.500l-1.500 6-4.500-4.500zM709.500 80.500l1.500-6 4.500 4.500z" fill="#222"/></g>
<g shape-rendering="auto"><path d="M747.500 86.500l3-25.500 16 17 7 8.500zM750.500 61l5 20 18 5.500M747.500 86.500l19-8.500-16-3z" fill="none" stroke="#333" stroke-width="1"/><path d="M752 75q-2-3 1-5l6-7q2-3 6-3h12v15l-8 2q-4 1-6-1l-2-4-5 4q-2 1-4-1z" fill="#F2B944" stroke="#D99A2B" stroke-width=".8"/></g>
<path d="M793.25 65H796.75V80H799.5L795 86L790.5 80H793.25z" fill="url(#red1)" shape-rendering="auto"/>
<path d="M802.8 62H804.2V72.0H806.3L803.5 76.5L800.7 72.0H802.8z" fill="#3E3A8C" shape-rendering="auto"/>
<path d="M811.0 67H814.0V81H817.0L812.5 87L808.0 81H811.0z" fill="#3E3A8C" shape-rendering="auto"/>
<g shape-rendering="auto" stroke="#55553f" stroke-width=".6" stroke-linejoin="round"><path d="M842 73.500l18 6.500v8l-18-11z" fill="#FBF6BD"/><path d="M860 80l13-18v3.500l-13 22.500z" fill="#C9D58E"/><path d="M842.500 73l12-6.500 5.500 12.500z" fill="#6DB24A"/><path d="M854.500 66.500l10.500 3.500-5 9z" fill="#F08A1D"/><path d="M854.500 66.500l6-3.500 4.500 7z" fill="#F5E02C"/><path d="M860.500 63l5.500-2.500 4 5.500-5 4z" fill="#1F6B35"/><path d="M866 60.500l7 1-3 4.500z" fill="#8E1C2A"/><path d="M865 70l5-4 3-4-13 18z" fill="#C9D58E"/></g>
<g shape-rendering="auto"><path d="M897.0 59.0L912.0 57.5" stroke="#9a9da2" stroke-width="1.2"/><path d="M898.0 87.5L914.0 86.0" stroke="#9a9da2" stroke-width="1.2"/><path d="M913.0 59.8L898.0 65.0" stroke="#a7aaae" stroke-width="3.1" stroke-linecap="round"/><path d="M913.0 67.2L898.0 72.5" stroke="#a7aaae" stroke-width="3.1" stroke-linecap="round"/><path d="M913.0 74.8L898.0 80.0" stroke="#a7aaae" stroke-width="3.1" stroke-linecap="round"/><path d="M913.0 82.2L898.0 87.5" stroke="#a7aaae" stroke-width="3.1" stroke-linecap="round"/><path d="M896.0 59.8L914.0 61.4" stroke="#85888d" stroke-width="5.0" stroke-linecap="round"/><path d="M896.3 59.5L913.7 61.2" stroke="#f7f7f7" stroke-width="3.3" stroke-linecap="round"/><path d="M896.0 67.2L914.0 68.9" stroke="#85888d" stroke-width="5.0" stroke-linecap="round"/><path d="M896.3 67.0L913.7 68.7" stroke="#f7f7f7" stroke-width="3.3" stroke-linecap="round"/><path d="M896.0 74.8L914.0 76.4" stroke="#85888d" stroke-width="5.0" stroke-linecap="round"/><path d="M896.3 74.5L913.7 76.2" stroke="#f7f7f7" stroke-width="3.3" stroke-linecap="round"/><path d="M896.0 82.2L914.0 83.9" stroke="#85888d" stroke-width="5.0" stroke-linecap="round"/><path d="M896.3 82.0L913.7 83.7" stroke="#f7f7f7" stroke-width="3.3" stroke-linecap="round"/></g>
<text x="886" y="83" font-size="25" fill="url(#red1)" font-family="Liberation Serif" font-weight="bold" >1</text>
<g shape-rendering="auto"><path d="M941.0 59.0L956.0 57.5" stroke="#9a9da2" stroke-width="1.2"/><path d="M942.0 87.5L958.0 86.0" stroke="#9a9da2" stroke-width="1.2"/><path d="M957.0 59.8L942.0 65.0" stroke="#a7aaae" stroke-width="3.1" stroke-linecap="round"/><path d="M957.0 67.2L942.0 72.5" stroke="#a7aaae" stroke-width="3.1" stroke-linecap="round"/><path d="M957.0 74.8L942.0 80.0" stroke="#a7aaae" stroke-width="3.1" stroke-linecap="round"/><path d="M957.0 82.2L942.0 87.5" stroke="#a7aaae" stroke-width="3.1" stroke-linecap="round"/><path d="M940.0 59.8L958.0 61.4" stroke="#85888d" stroke-width="5.0" stroke-linecap="round"/><path d="M940.3 59.5L957.7 61.2" stroke="#f7f7f7" stroke-width="3.3" stroke-linecap="round"/><path d="M940.0 67.2L958.0 68.9" stroke="#85888d" stroke-width="5.0" stroke-linecap="round"/><path d="M940.3 67.0L957.7 68.7" stroke="#f7f7f7" stroke-width="3.3" stroke-linecap="round"/><path d="M940.0 74.8L958.0 76.4" stroke="#85888d" stroke-width="5.0" stroke-linecap="round"/><path d="M940.3 74.5L957.7 76.2" stroke="#f7f7f7" stroke-width="3.3" stroke-linecap="round"/><path d="M940.0 82.2L958.0 83.9" stroke="#85888d" stroke-width="5.0" stroke-linecap="round"/><path d="M940.3 82.0L957.7 83.7" stroke="#f7f7f7" stroke-width="3.3" stroke-linecap="round"/></g>
<text x="930" y="83" font-size="25" fill="url(#red1)" font-family="Liberation Serif" font-weight="bold" >2</text>
<g shape-rendering="auto"><path d="M985.0 59.0L1000.0 57.5" stroke="#9a9da2" stroke-width="1.2"/><path d="M986.0 87.5L1002.0 86.0" stroke="#9a9da2" stroke-width="1.2"/><path d="M1001.0 59.8L986.0 65.0" stroke="#a7aaae" stroke-width="3.1" stroke-linecap="round"/><path d="M1001.0 67.2L986.0 72.5" stroke="#a7aaae" stroke-width="3.1" stroke-linecap="round"/><path d="M1001.0 74.8L986.0 80.0" stroke="#a7aaae" stroke-width="3.1" stroke-linecap="round"/><path d="M1001.0 82.2L986.0 87.5" stroke="#a7aaae" stroke-width="3.1" stroke-linecap="round"/><path d="M984.0 59.8L1002.0 61.4" stroke="#85888d" stroke-width="5.0" stroke-linecap="round"/><path d="M984.3 59.5L1001.7 61.2" stroke="#f7f7f7" stroke-width="3.3" stroke-linecap="round"/><path d="M984.0 67.2L1002.0 68.9" stroke="#85888d" stroke-width="5.0" stroke-linecap="round"/><path d="M984.3 67.0L1001.7 68.7" stroke="#f7f7f7" stroke-width="3.3" stroke-linecap="round"/><path d="M984.0 74.8L1002.0 76.4" stroke="#85888d" stroke-width="5.0" stroke-linecap="round"/><path d="M984.3 74.5L1001.7 76.2" stroke="#f7f7f7" stroke-width="3.3" stroke-linecap="round"/><path d="M984.0 82.2L1002.0 83.9" stroke="#85888d" stroke-width="5.0" stroke-linecap="round"/><path d="M984.3 82.0L1001.7 83.7" stroke="#f7f7f7" stroke-width="3.3" stroke-linecap="round"/></g>
<text x="976" y="83" font-size="25" fill="url(#red1)" font-family="Liberation Serif" font-weight="bold" >3</text>
<g shape-rendering="auto"><path d="M1054.0 82.5l3.500 3.500" stroke="#111" stroke-width="5" stroke-linecap="round"/><circle cx="1043.5" cy="72" r="14" fill="#f4f4f4" stroke="#b5b8bd" stroke-width="1"/><circle cx="1043.5" cy="72" r="11" fill="url(#glass)" stroke="#3F76C0" stroke-width="1"/></g>
<rect x="1036.500" y="67.500" width="14" height="10" fill="#C9DCF1" stroke="#9a9a9a" stroke-width="1.400"/><path d="M1034 78.500h5M1036.500 76v5M1048 66.500h5M1050.500 64v5" stroke="#C21F26" stroke-width="1.800"/>
<g shape-rendering="auto"><path d="M1098.5 82.5l3.500 3.500" stroke="#111" stroke-width="5" stroke-linecap="round"/><circle cx="1088" cy="72" r="14" fill="#f4f4f4" stroke="#b5b8bd" stroke-width="1"/><circle cx="1088" cy="72" r="11" fill="url(#glass)" stroke="#3F76C0" stroke-width="1"/></g>
<g shape-rendering="auto" fill="#B4262B" stroke="#B4262B"><path d="M1088 64v16M1080 72h16" stroke-width="1.800" fill="none"/><path d="M1088 61.500l3 4.500h-6zM1088 82.500l3-4.500h-6zM1077.500 72l4.500-3v6zM1098.500 72l-4.500-3v6z" stroke="none"/></g>
<g shape-rendering="auto" stroke="#8a8f7a" stroke-width=".6"><path d="M1127 70l10 5v10l-10-5z" fill="#FBF8C8"/><path d="M1137 75l17-9v10l-17 9z" fill="#C5CF9E"/><path d="M1127 70q9-9 17-8q6 1 10 4l-17 9z" fill="#4F9E62"/></g>
<g shape-rendering="auto"><path d="M1181 63q6-8 12 0q3 2 4 4.500q-5-3-9-1.500q-4 1-7-3z" fill="#F6E61C"/><path d="M1174 69l7-6q3 4 7 3q4-1.500 9 1.500v1.500z" fill="#6FC8C0"/><path d="M1172 73h26v4q-8-3-14 0q-6 2-12-1z" fill="#6FC8C0"/><path d="M1171 77q6 3 13-1q6-3 14 1v7q-7 2-13-2q-7-4-14 0z" fill="#4A3F9C"/><path d="M1170 82q8-5 15 0q6 4 13 2v1q-14 3-28 0z" fill="#0E8A3A"/><path d="M1174 69.500h23M1172 73h26" stroke="#8a8a8a" stroke-width=".8"/></g>
<g shape-rendering="auto" stroke="#6a6a6a" fill="none"><path d="M1221 58.500h11M1227 59v9h9v6h-7v1" stroke-width="2.400"/><path d="M1224 74h6l-1 3h-4zM1224 78h6l-1 3h-4zM1224.500 82h5l-1 3h-3zM1226 85.500l1 3.500 1-3.500" fill="#8a8a8a" stroke-width=".8"/></g>
<g shape-rendering="auto"><path d="M1262 86l12-9 9 1z" fill="#8e9197" opacity=".7"/><path d="M1262 58v30" stroke="#666" stroke-width="1.600"/><path d="M1260 88h4" stroke="#444" stroke-width="1.500"/><path d="M1263 60l22 7.500-22 8.500z" fill="#D22222"/><path d="M1263 60l8 3-8 9z" fill="#E85A5A" opacity=".6"/></g>
<rect x="1301.500" y="61.500" width="28" height="22" fill="#f4f4fa" stroke="#a9a9d8"/><rect x="1302" y="62" width="27" height="3" fill="#8f8fe0"/>
<g shape-rendering="auto"><path d="M1311.0 59.0L1325.0 57.5" stroke="#9a9da2" stroke-width="1.2"/><path d="M1312.0 87.5L1327.0 86.0" stroke="#9a9da2" stroke-width="1.2"/><path d="M1326.0 59.8L1312.0 65.0" stroke="#a7aaae" stroke-width="3.1" stroke-linecap="round"/><path d="M1326.0 67.2L1312.0 72.5" stroke="#a7aaae" stroke-width="3.1" stroke-linecap="round"/><path d="M1326.0 74.8L1312.0 80.0" stroke="#a7aaae" stroke-width="3.1" stroke-linecap="round"/><path d="M1326.0 82.2L1312.0 87.5" stroke="#a7aaae" stroke-width="3.1" stroke-linecap="round"/><path d="M1310.0 59.8L1327.0 61.4" stroke="#85888d" stroke-width="5.0" stroke-linecap="round"/><path d="M1310.3 59.5L1326.7 61.2" stroke="#f7f7f7" stroke-width="3.3" stroke-linecap="round"/><path d="M1310.0 67.2L1327.0 68.9" stroke="#85888d" stroke-width="5.0" stroke-linecap="round"/><path d="M1310.3 67.0L1326.7 68.7" stroke="#f7f7f7" stroke-width="3.3" stroke-linecap="round"/><path d="M1310.0 74.8L1327.0 76.4" stroke="#85888d" stroke-width="5.0" stroke-linecap="round"/><path d="M1310.3 74.5L1326.7 76.2" stroke="#f7f7f7" stroke-width="3.3" stroke-linecap="round"/><path d="M1310.0 82.2L1327.0 83.9" stroke="#85888d" stroke-width="5.0" stroke-linecap="round"/><path d="M1310.3 82.0L1326.7 83.7" stroke="#f7f7f7" stroke-width="3.3" stroke-linecap="round"/></g>
<rect x="1346" y="61" width="4" height="4" fill="#E8222A" />
<rect x="1350" y="61" width="4" height="4" fill="#F28A1E" />
<rect x="1354" y="61" width="4" height="4" fill="#F5E616" />
<rect x="1358" y="61" width="4" height="4" fill="#1E9E48" />
<rect x="1362" y="61" width="4" height="4" fill="#17A8E0" />
<rect x="1366" y="61" width="4" height="4" fill="#1B6FC8" />
<rect x="1370" y="61" width="4" height="4" fill="#A8489E" />
<rect x="1345.500" y="60.500" width="29" height="5" fill="none" stroke="#555"/>
<text x="1347" y="83.5" font-size="23" fill="#4a4a4a" font-family="Liberation Serif" font-weight="bold" textLength="12" lengthAdjust="spacingAndGlyphs" >0</text>
<rect x="1403" y="61" width="1.4" height="24" fill="#5b6090" /><rect x="1409" y="61" width="1.4" height="24" fill="#5b6090" /><rect x="1415" y="61" width="1.4" height="24" fill="#5b6090" /><rect x="1421" y="61" width="1.4" height="24" fill="#5b6090" /><rect x="1399" y="65" width="27" height="1.4" fill="#5b6090" /><rect x="1399" y="70" width="27" height="1.4" fill="#5b6090" /><rect x="1399" y="75" width="27" height="1.4" fill="#5b6090" /><rect x="1399" y="80" width="27" height="1.4" fill="#5b6090" />
<rect x="1446" y="63" width="20" height="20" fill="#0E6B33"/><rect x="1448" y="65" width="16" height="16" fill="url(#gsq)"/>
<rect x="1484" y="67" width="20" height="20" fill="#0E6B33"/><rect x="1486" y="69" width="16" height="16" fill="url(#gsq)"/>
<text x="1504" y="77" font-size="24" fill="#4a4a4a" font-family="Liberation Serif" font-weight="bold" >3</text>
<rect x="1528" y="66" width="20" height="20" fill="#B5221F"/><rect x="1530" y="68" width="16" height="16" fill="url(#gsq)"/>
<path d="M1549 66.500h11M1554.500 61v11" stroke="#A81C22" stroke-width="2.600"/>
<path d="M1574 85.3H1593.5L1602 76H1585z" fill="url(#pg)" stroke="#1E5E9E" stroke-width=".8" shape-rendering="auto"/>
<path d="M1588.0 61H1591.0V75.5H1594.0L1589.5 81L1585.0 75.5H1588.0z" fill="#3E3A8C" shape-rendering="auto"/>
<text x="1617" y="75.5" font-size="21" fill="#2E7D32" font-family="Liberation Serif" font-weight="bold" >5</text>
<path d="M1618 85.3H1637.5L1646 76H1629z" fill="url(#pg)" stroke="#1E5E9E" stroke-width=".8" shape-rendering="auto"/>
<path d="M1632.0 61H1635.0V75.5H1638.0L1633.5 81L1629.0 75.5H1632.0z" fill="#3E3A8C" shape-rendering="auto"/>
<path d="M1661 82.4H1680.5L1689 73H1672.5z" fill="url(#pg)" stroke="#1E5E9E" stroke-width=".8" shape-rendering="auto"/>
<g shape-rendering="auto"><path d="M1689.500 66.500h-13v10" stroke="#222" stroke-width="1.300" fill="none"/><path d="M1676.500 80l-3.500-5h7z" fill="#222"/></g>
<defs><linearGradient id="cr" x1="0" x2="1"><stop offset="0" stop-color="#E0143C"/><stop offset="1" stop-color="#8E1C3A"/></linearGradient><linearGradient id="cy" x1="0" x2="1"><stop offset="0" stop-color="#FFFBC8"/><stop offset="1" stop-color="#FFEE00"/></linearGradient><linearGradient id="co" x1="0" x2="1" y1="0" y2="1"><stop offset="0" stop-color="#F08A2A"/><stop offset="1" stop-color="#9A3A12"/></linearGradient></defs>
<g stroke="#555" stroke-width="1"><rect x="1707.500" y="59.500" width="13" height="13" fill="url(#cr)"/><rect x="1720.500" y="59.500" width="13" height="13" fill="url(#cy)"/><rect x="1720.500" y="72.500" width="13" height="13" fill="url(#co)"/></g>
<g shape-rendering="auto" stroke="#6a6a5a" stroke-width=".7"><path d="M1752.500 73l8 4.500v8.500l-8-4.500z" fill="#FFFCD8"/><path d="M1760.500 77.500l19-7v9l-19 6.500z" fill="#D9842E"/><path d="M1752.500 73l14-11.500 13 9-19 7z" fill="#2F7D46"/><path d="M1766.500 61.500l-6 16" fill="none"/></g>
<g shape-rendering="auto"><path d="M1795.5 84.5V62.5" stroke="#0E7A3B" stroke-width="1.3"/><path d="M1795.5 58.5l2.500 7h-5z" fill="#0E7A3B"/><path d="M1795.5 84.5H1818.5" stroke="#C8201F" stroke-width="1.3"/><path d="M1822.5 84.5l-7-2.500v5z" fill="#C8201F"/></g>
<rect x="1846" y="59" width="12" height="12" fill="#C3221F"/><rect x="1848" y="61" width="8" height="8" fill="url(#gsq)"/><rect x="1863" y="76" width="11" height="11" fill="#0E6B33"/><rect x="1864.500" y="77.500" width="8" height="8" fill="url(#gsq)"/>
<g shape-rendering="auto"><path d="M1850 75q1 7 9 8.500" stroke="#444" stroke-width="1.300" fill="none"/><path d="M1849.500 72l2.500 4.500h-5zM1862 83.500l-4.500 2v-4.500z" fill="#444"/></g>
<!-- menu -->
<rect x="137" y="50" width="338" height="248" rx="2" fill="#000" opacity=".18"/><rect x="136" y="49" width="338" height="248" rx="2" fill="#000" opacity=".15"/>
<rect x="134" y="47" width="339" height="249" fill="#868B95" />
<rect x="135" y="48" width="337" height="247" fill="#FBFBFB" />
<rect x="135" y="48" width="25" height="247" fill="#ECEDEF" />
<rect x="160" y="48" width="1" height="247" fill="#D3D6DB" />
<rect x="161" y="48" width="1" height="247" fill="#fff" />
<rect x="135" y="47" width="119" height="1" fill="#9EA5B1" />
<defs><linearGradient id="hl" x1="0" y1="0" x2="0" y2="1"><stop offset="0" stop-color="#FFFDF2"/><stop offset=".48" stop-color="#FEE9B0"/><stop offset=".5" stop-color="#FFCF2C"/><stop offset="1" stop-color="#FEE79C"/></linearGradient></defs>
<rect x="136.500" y="167.500" width="333" height="20" rx="2" fill="url(#hl)" stroke="#E5C365"/>
<text x="166" y="64.5" font-size="12" fill="#22304a" textLength="114.5" lengthAdjust="spacingAndGlyphs" >Параметры расчета...</text>
<text x="166" y="86" font-size="12" fill="#22304a" textLength="256.5" lengthAdjust="spacingAndGlyphs" >Формировать изополя для выбранных нагрузок</text>
<text x="166" y="116" font-size="12" fill="#22304a" textLength="84.5" lengthAdjust="spacingAndGlyphs" >Расчет (метод 1)</text>
<text x="166" y="138" font-size="12" fill="#22304a" textLength="84.5" lengthAdjust="spacingAndGlyphs" >Расчет (метод 2)</text>
<text x="166" y="160" font-size="12" fill="#22304a" textLength="84.5" lengthAdjust="spacingAndGlyphs" >Расчет (метод 3)</text>
<text x="166" y="181.5" font-size="12" fill="#22304a" textLength="130.5" lengthAdjust="spacingAndGlyphs" >Расчет (метод Савинова)</text>
<text x="166" y="212" font-size="12" fill="#22304a" textLength="227.5" lengthAdjust="spacingAndGlyphs" >Результаты расчета в произвольной точке</text>
<text x="166" y="234" font-size="12" fill="#22304a" textLength="86" lengthAdjust="spacingAndGlyphs" >Изополя осадок</text>
<text x="166" y="264" font-size="12" fill="#22304a" textLength="92" lengthAdjust="spacingAndGlyphs" >Таблица осадок...</text>
<text x="166" y="286" font-size="12" fill="#22304a" textLength="112.5" lengthAdjust="spacingAndGlyphs" >Таблица перекосов...</text>
<rect x="167" y="96" width="304" height="1" fill="#C8C8C8" />
<rect x="167" y="97" width="304" height="1" fill="#fff" />
<rect x="167" y="192" width="304" height="1" fill="#C8C8C8" />
<rect x="167" y="193" width="304" height="1" fill="#fff" />
<rect x="167" y="244" width="304" height="1" fill="#C8C8C8" />
<rect x="167" y="245" width="304" height="1" fill="#fff" />
<path d="M463 226.500l4 3.500-4 3.500z" fill="#222" shape-rendering="auto"/>
<g shape-rendering="auto"><path d="M141.500 68.500l3-12 13 12zM144.500 56.500l5 8 8 4M141.500 68.500l8-4" fill="none" stroke="#333" stroke-width="1"/><path d="M146 56q3-4 7-3l5 1q-1 4-5 6l-3 1z" fill="#E8A96A" stroke="#B87838" stroke-width=".6"/></g>
<g shape-rendering="auto"><path d="M143 77h2.500v8h2l-3.250 4-3.250-4h2z" fill="#B01E2A"/><path d="M149.500 76v6m-1.800-2l1.800 3 1.800-3" stroke="#2B2A8A" stroke-width="1" fill="none"/><path d="M154.500 79v9m-2.300-3l2.300 4 2.300-4" stroke="#2B2A8A" stroke-width="1.300" fill="none"/></g>
<text x="140.5" y="118" font-size="15" fill="#A8182E" font-family="Liberation Serif" font-weight="bold" >1</text>
<g shape-rendering="auto"><ellipse cx="152" cy="108.2" rx="3.8" ry="1.4" fill="#efefef" stroke="#9a9a9a" stroke-width="0.8" transform="rotate(-12 152 108.2)"/><ellipse cx="152" cy="111.6" rx="3.8" ry="1.4" fill="#efefef" stroke="#9a9a9a" stroke-width="0.8" transform="rotate(-12 152 111.6)"/><ellipse cx="152" cy="115.0" rx="3.8" ry="1.4" fill="#efefef" stroke="#9a9a9a" stroke-width="0.8" transform="rotate(-12 152 115.0)"/><ellipse cx="152" cy="118.4" rx="3.8" ry="1.4" fill="#efefef" stroke="#9a9a9a" stroke-width="0.8" transform="rotate(-12 152 118.4)"/></g>
<text x="140.5" y="140" font-size="15" fill="#A8182E" font-family="Liberation Serif" font-weight="bold" >2</text>
<g shape-rendering="auto"><ellipse cx="152" cy="130.2" rx="3.8" ry="1.4" fill="#efefef" stroke="#9a9a9a" stroke-width="0.8" transform="rotate(-12 152 130.2)"/><ellipse cx="152" cy="133.6" rx="3.8" ry="1.4" fill="#efefef" stroke="#9a9a9a" stroke-width="0.8" transform="rotate(-12 152 133.6)"/><ellipse cx="152" cy="137.0" rx="3.8" ry="1.4" fill="#efefef" stroke="#9a9a9a" stroke-width="0.8" transform="rotate(-12 152 137.0)"/><ellipse cx="152" cy="140.4" rx="3.8" ry="1.4" fill="#efefef" stroke="#9a9a9a" stroke-width="0.8" transform="rotate(-12 152 140.4)"/></g>
<text x="140.5" y="162" font-size="15" fill="#A8182E" font-family="Liberation Serif" font-weight="bold" >3</text>
<g shape-rendering="auto"><ellipse cx="152" cy="152.2" rx="3.8" ry="1.4" fill="#efefef" stroke="#9a9a9a" stroke-width="0.8" transform="rotate(-12 152 152.2)"/><ellipse cx="152" cy="155.6" rx="3.8" ry="1.4" fill="#efefef" stroke="#9a9a9a" stroke-width="0.8" transform="rotate(-12 152 155.6)"/><ellipse cx="152" cy="159.0" rx="3.8" ry="1.4" fill="#efefef" stroke="#9a9a9a" stroke-width="0.8" transform="rotate(-12 152 159.0)"/><ellipse cx="152" cy="162.4" rx="3.8" ry="1.4" fill="#efefef" stroke="#9a9a9a" stroke-width="0.8" transform="rotate(-12 152 162.4)"/></g>
<rect x="138.500" y="198.500" width="19" height="19" rx="1.500" fill="#FDDBA8" stroke="#F29536"/>
<rect x="141.500" y="202.500" width="13" height="11" fill="#fafaff" stroke="#b0b0d8"/><rect x="142" y="203" width="12" height="2" fill="#9a9ae0"/>
<g shape-rendering="auto"><ellipse cx="149" cy="204.2" rx="3.8" ry="1.4" fill="#efefef" stroke="#8a8a8a" stroke-width="0.8" transform="rotate(-12 149 204.2)"/><ellipse cx="149" cy="207.6" rx="3.8" ry="1.4" fill="#efefef" stroke="#8a8a8a" stroke-width="0.8" transform="rotate(-12 149 207.6)"/><ellipse cx="149" cy="211.0" rx="3.8" ry="1.4" fill="#efefef" stroke="#8a8a8a" stroke-width="0.8" transform="rotate(-12 149 211.0)"/><ellipse cx="149" cy="214.4" rx="3.8" ry="1.4" fill="#efefef" stroke="#8a8a8a" stroke-width="0.8" transform="rotate(-12 149 214.4)"/></g>
</svg></body></html>
